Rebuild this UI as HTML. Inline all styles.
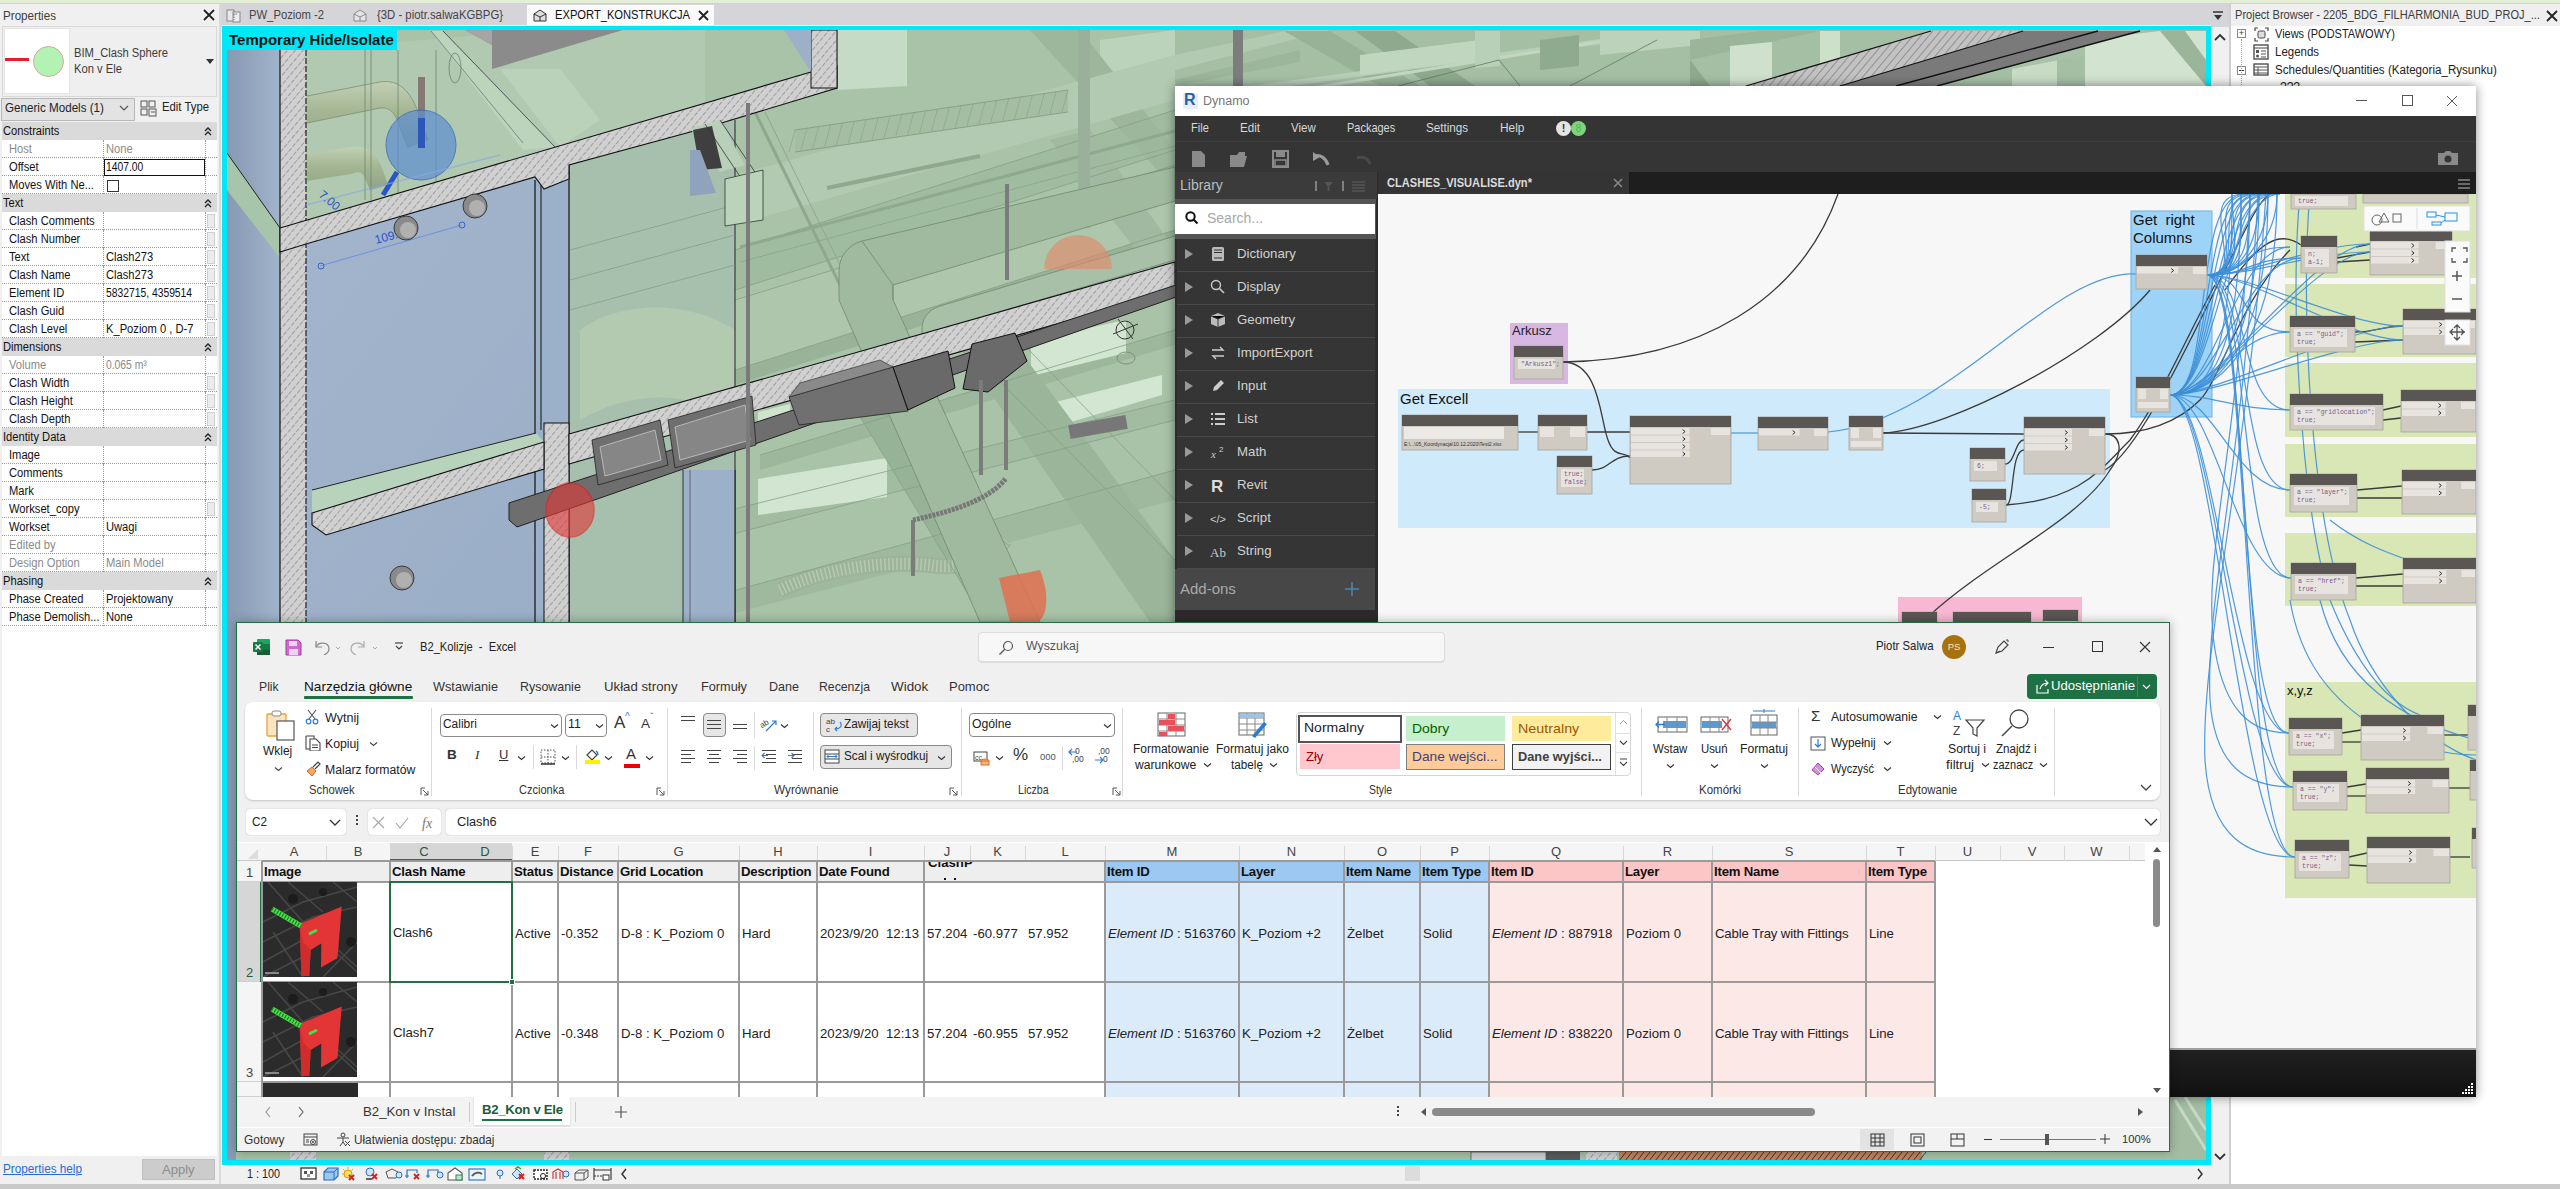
<!DOCTYPE html>
<html><head><meta charset="utf-8"><style>*{box-sizing:border-box;margin:0;padding:0}
html,body{width:2560px;height:1189px;overflow:hidden;background:#f0f0f0;font-family:"Liberation Sans",sans-serif;font-size:12px;color:#000;position:relative}
.a{position:absolute;white-space:nowrap}
.a>svg{display:block}
.t12{font-size:12px;line-height:14px}
.t13{font-size:13px;line-height:15px}
.t14{font-size:14px;line-height:16px}
</style></head><body>
<div class="a" style="left:221px;top:1165px;width:2009px;height:19px;background:#f0f0f0"></div>
<div class="a" style="left:247px;top:1167px;font-size:12px;line-height:14px;color:#222;transform:scaleX(0.899);transform-origin:0 0;">1 : 100</div>
<div class="a" style="left:236px;top:1166px"><svg width="380" height="16"><rect x="65" y="2" width="15" height="11" fill="#fff" stroke="#333" stroke-width="1.3"/><rect x="68" y="5" width="3" height="3" fill="#555"/><rect x="74" y="5" width="3" height="3" fill="#555"/><rect x="71" y="8" width="3" height="3" fill="#999"/><path d="M88 6l4-4h10v8l-4 4H88Z" fill="#9cc8f0" stroke="#2a6fc0" stroke-width="1.2"/><path d="M88 6h10v8M98 6l4-4" stroke="#2a6fc0" fill="none"/><circle cx="112" cy="8" r="4" fill="#f8e060" stroke="#d0a000"/><path d="M112 1v2M106 8h2M107 3l1.5 1.5M117 3l-1.5 1.5" stroke="#e0b000"/><path d="M113 9l5 5M118 9l-5 5" stroke="#e02020" stroke-width="2"/><circle cx="134" cy="6" r="4" fill="#cfe6fa" stroke="#2a6fc0"/><path d="M130 13h6" stroke="#333" stroke-width="1.5"/><path d="M136 8l5 5M141 8l-5 5" stroke="#e02020" stroke-width="2"/><path d="M150 6l6-3 6 3-2 6h-8Z" fill="#eee" stroke="#555"/><circle cx="163" cy="9" r="3" fill="#cfe6fa" stroke="#2a6fc0"/><path d="M171 12V4h10v3M169 10h4" stroke="#2a6fc0" stroke-width="1.2" fill="none"/><path d="M178 8l5 5M183 8l-5 5" stroke="#e02020" stroke-width="2"/><path d="M192 12V4h10v3M190 10h4" stroke="#2a6fc0" stroke-width="1.2" fill="none"/><circle cx="204" cy="9" r="3" fill="#cfe6fa" stroke="#2a6fc0"/><path d="M212 7l7-5 7 5v7h-14Z" fill="#fff" stroke="#555" stroke-width="1.1"/><rect x="220" y="9" width="6" height="5" fill="#bde6d0" stroke="#2a8a5a"/><rect x="233" y="3" width="16" height="11" fill="#e8f2fb" stroke="#2a6fc0" stroke-width="1.1"/><path d="M236 10c3-4 7-4 10-2" stroke="#555" stroke-width="2" fill="none"/><circle cx="264" cy="7" r="3" fill="#cfe6fa" stroke="#2a6fc0"/><path d="M264 10v3" stroke="#2a6fc0"/><path d="M276 8l5-5 5 5-5 5Z" fill="#cfe6fa" stroke="#2a6fc0"/><path d="M279 3l3-2 3 2" stroke="#3a9a3a" fill="none" stroke-width="1.5"/><path d="M283 8l5 5M288 8l-5 5" stroke="#e02020" stroke-width="2"/><rect x="298" y="4" width="13" height="9" fill="#fff" stroke="#222" stroke-width="1.4" stroke-dasharray="2 1"/><circle cx="307" cy="10" r="2.5" fill="none" stroke="#222"/><path d="M317 13V6l5-3 5 3v7M320 6v7M324 6v7" stroke="#c03030" stroke-width="1.1" fill="none"/><circle cx="330" cy="8" r="3" fill="#cfe6fa" stroke="#2a6fc0"/><path d="M339 7l4-3h9v7l-4 3h-9Z" fill="#eee" stroke="#555"/><path d="M339 7h9v7M348 7l4-3" stroke="#555" fill="none"/><path d="M358 2v12M375 2v12M358 4h17" stroke="#333" stroke-width="1.1"/><path d="M358 10h8" stroke="#333" stroke-dasharray="2 1"/><rect x="367" y="9" width="6" height="5" fill="#fff" stroke="#333"/></svg></div>
<div class="a" style="left:620px;top:1168px"><svg width="8" height="12"><path d="M6 1L2 6L6 11" stroke="#333" fill="none" stroke-width="1.5"/></svg></div>
<div class="a" style="left:1405px;top:1166px;width:15px;height:15px;background:#dcdcdc"></div>
<div class="a" style="left:2196px;top:1168px"><svg width="8" height="12"><path d="M2 1L6 6L2 11" stroke="#333" fill="none" stroke-width="1.5"/></svg></div>
<div class="a" style="left:2211px;top:27px;width:18px;height:1138px;background:#f0f0f0"></div>
<div class="a" style="left:2214px;top:33px"><svg width="12" height="9"><path d="M1 7L6 2L11 7" stroke="#333" fill="none" stroke-width="1.8"/></svg></div>
<div class="a" style="left:2214px;top:1152px"><svg width="12" height="9"><path d="M1 2L6 7L11 2" stroke="#333" fill="none" stroke-width="1.8"/></svg></div>
<div class="a" style="left:0;top:1184px;width:2560px;height:5px;background:#c9c9c9"></div>
<div class="a" style="left:0;top:0;width:2560px;height:3px;background:#e4edd6"></div>
<div class="a" style="left:0;top:3px;width:2560px;height:2px;background:#cfd3cc"></div>
<div class="a" style="left:0;top:4px;width:219px;height:1180px;background:#f0f0f0"></div>
<div class="a" style="left:219px;top:4px;width:2px;height:1180px;background:#d9d9d9"></div>
<div class="a" style="left:3px;top:9px;font-size:12.5px;line-height:15px;color:#3c3c3c;transform:scaleX(0.930);transform-origin:0 0;">Properties</div>
<div class="a" style="left:202px;top:8px;width:14px;height:14px"><svg width="14" height="14"><path d="M2 2L12 12M12 2L2 12" stroke="#222" stroke-width="1.8"/></svg></div>
<div class="a" style="left:2px;top:26px;width:215px;height:71px;border:1px solid #d8d8d8;background:#efefef"></div>
<div class="a" style="left:4px;top:28px;width:66px;height:66px;background:#fff;border:1px solid #e4e4e4"></div>
<div class="a" style="left:5px;top:58px;width:24px;height:3px;background:#e0202a"></div>
<div class="a" style="left:33px;top:46px;width:31px;height:31px;border-radius:50%;background:#b2f2b2;border:1.5px solid #d9a8a0"></div>
<div class="a" style="left:74px;top:46px;font-size:12px;line-height:14px;color:#3c3c3c;transform:scaleX(0.933);transform-origin:0 0;">BIM_Clash Sphere</div>
<div class="a" style="left:74px;top:62px;font-size:12px;line-height:14px;color:#3c3c3c;transform:scaleX(0.934);transform-origin:0 0;">Kon v Ele</div>
<div class="a" style="left:206px;top:59px;width:0;height:0;border-left:4px solid transparent;border-right:4px solid transparent;border-top:5px solid #333"></div>
<div class="a" style="left:1px;top:98px;width:134px;height:23px;background:#e3e3e3;border:1px solid #b8b8b8"></div>
<div class="a" style="left:5px;top:101px;font-size:12px;line-height:14px;color:#222;transform:scaleX(0.970);transform-origin:0 0;">Generic Models (1)</div>
<div class="a" style="left:119px;top:104px"><svg width="10" height="8"><path d="M1 2L5 6L9 2" stroke="#555" fill="none" stroke-width="1.2"/></svg></div>
<div class="a" style="left:140px;top:100px"><svg width="18" height="17"><rect x="1" y="1" width="6" height="6" fill="none" stroke="#555"/><rect x="9" y="1" width="6" height="6" fill="none" stroke="#555"/><rect x="1" y="9" width="6" height="6" fill="none" stroke="#555"/><rect x="9" y="9" width="7" height="7" fill="none" stroke="#555"/><path d="M11 12h4" stroke="#555"/></svg></div>
<div class="a" style="left:162px;top:100px;font-size:12px;line-height:14px;color:#222;transform:scaleX(0.944);transform-origin:0 0;">Edit Type</div>
<div class="a" style="left:2px;top:122px;width:215px;height:18px;background:#dadada"></div>
<div class="a" style="left:3px;top:124px;font-size:12px;line-height:14px;color:#111;transform:scaleX(0.930);transform-origin:0 0;">Constraints</div>
<div class="a" style="left:203px;top:126px"><svg width="10" height="10"><path d="M2 5L5 2L8 5M2 9L5 6L8 9" stroke="#222" fill="none" stroke-width="1.3"/></svg></div>
<div class="a" style="left:2px;top:140px;width:215px;height:18px;background:#fff;border-bottom:1px dotted #9a9a9a"></div>
<div class="a" style="left:103px;top:140px;width:0;height:18px;border-left:1px dotted #9a9a9a"></div>
<div class="a" style="left:205px;top:140px;width:0;height:18px;border-left:1px dotted #9a9a9a"></div>
<div class="a" style="left:9px;top:142px;font-size:12px;line-height:14px;color:#8a8a8a;transform:scaleX(0.930);transform-origin:0 0;">Host</div>
<div class="a" style="left:106px;top:142px;font-size:12px;line-height:14px;color:#8a8a8a;transform:scaleX(0.930);transform-origin:0 0;">None</div>
<div class="a" style="left:2px;top:158px;width:215px;height:18px;background:#fff;border-bottom:1px dotted #9a9a9a"></div>
<div class="a" style="left:103px;top:158px;width:0;height:18px;border-left:1px dotted #9a9a9a"></div>
<div class="a" style="left:205px;top:158px;width:0;height:18px;border-left:1px dotted #9a9a9a"></div>
<div class="a" style="left:9px;top:160px;font-size:12px;line-height:14px;color:#111;transform:scaleX(0.930);transform-origin:0 0;">Offset</div>
<div class="a" style="left:104px;top:159px;width:101px;height:17px;border:1.5px solid #111;background:#fff"></div>
<div class="a" style="left:106px;top:160px;font-size:12px;line-height:14px;color:#111;transform:scaleX(0.860);transform-origin:0 0;">1407.00</div>
<div class="a" style="left:2px;top:176px;width:215px;height:18px;background:#fff;border-bottom:1px dotted #9a9a9a"></div>
<div class="a" style="left:103px;top:176px;width:0;height:18px;border-left:1px dotted #9a9a9a"></div>
<div class="a" style="left:205px;top:176px;width:0;height:18px;border-left:1px dotted #9a9a9a"></div>
<div class="a" style="left:9px;top:178px;font-size:12px;line-height:14px;color:#111;transform:scaleX(0.930);transform-origin:0 0;">Moves With Ne...</div>
<div class="a" style="left:107px;top:180px;width:12px;height:12px;border:1px solid #333;background:#fff"></div>
<div class="a" style="left:2px;top:194px;width:215px;height:18px;background:#dadada"></div>
<div class="a" style="left:3px;top:196px;font-size:12px;line-height:14px;color:#111;transform:scaleX(0.930);transform-origin:0 0;">Text</div>
<div class="a" style="left:203px;top:198px"><svg width="10" height="10"><path d="M2 5L5 2L8 5M2 9L5 6L8 9" stroke="#222" fill="none" stroke-width="1.3"/></svg></div>
<div class="a" style="left:2px;top:212px;width:215px;height:18px;background:#fff;border-bottom:1px dotted #9a9a9a"></div>
<div class="a" style="left:103px;top:212px;width:0;height:18px;border-left:1px dotted #9a9a9a"></div>
<div class="a" style="left:205px;top:212px;width:0;height:18px;border-left:1px dotted #9a9a9a"></div>
<div class="a" style="left:9px;top:214px;font-size:12px;line-height:14px;color:#111;transform:scaleX(0.930);transform-origin:0 0;">Clash Comments</div>
<div class="a" style="left:207px;top:214px;width:8px;height:14px;background:#ececec;border:1px solid #cfcfcf"></div>
<div class="a" style="left:2px;top:230px;width:215px;height:18px;background:#fff;border-bottom:1px dotted #9a9a9a"></div>
<div class="a" style="left:103px;top:230px;width:0;height:18px;border-left:1px dotted #9a9a9a"></div>
<div class="a" style="left:205px;top:230px;width:0;height:18px;border-left:1px dotted #9a9a9a"></div>
<div class="a" style="left:9px;top:232px;font-size:12px;line-height:14px;color:#111;transform:scaleX(0.930);transform-origin:0 0;">Clash Number</div>
<div class="a" style="left:207px;top:232px;width:8px;height:14px;background:#ececec;border:1px solid #cfcfcf"></div>
<div class="a" style="left:2px;top:248px;width:215px;height:18px;background:#fff;border-bottom:1px dotted #9a9a9a"></div>
<div class="a" style="left:103px;top:248px;width:0;height:18px;border-left:1px dotted #9a9a9a"></div>
<div class="a" style="left:205px;top:248px;width:0;height:18px;border-left:1px dotted #9a9a9a"></div>
<div class="a" style="left:9px;top:250px;font-size:12px;line-height:14px;color:#111;transform:scaleX(0.930);transform-origin:0 0;">Text</div>
<div class="a" style="left:106px;top:250px;font-size:12px;line-height:14px;color:#111;transform:scaleX(0.930);transform-origin:0 0;">Clash273</div>
<div class="a" style="left:207px;top:250px;width:8px;height:14px;background:#ececec;border:1px solid #cfcfcf"></div>
<div class="a" style="left:2px;top:266px;width:215px;height:18px;background:#fff;border-bottom:1px dotted #9a9a9a"></div>
<div class="a" style="left:103px;top:266px;width:0;height:18px;border-left:1px dotted #9a9a9a"></div>
<div class="a" style="left:205px;top:266px;width:0;height:18px;border-left:1px dotted #9a9a9a"></div>
<div class="a" style="left:9px;top:268px;font-size:12px;line-height:14px;color:#111;transform:scaleX(0.930);transform-origin:0 0;">Clash Name</div>
<div class="a" style="left:106px;top:268px;font-size:12px;line-height:14px;color:#111;transform:scaleX(0.930);transform-origin:0 0;">Clash273</div>
<div class="a" style="left:207px;top:268px;width:8px;height:14px;background:#ececec;border:1px solid #cfcfcf"></div>
<div class="a" style="left:2px;top:284px;width:215px;height:18px;background:#fff;border-bottom:1px dotted #9a9a9a"></div>
<div class="a" style="left:103px;top:284px;width:0;height:18px;border-left:1px dotted #9a9a9a"></div>
<div class="a" style="left:205px;top:284px;width:0;height:18px;border-left:1px dotted #9a9a9a"></div>
<div class="a" style="left:9px;top:286px;font-size:12px;line-height:14px;color:#111;transform:scaleX(0.930);transform-origin:0 0;">Element ID</div>
<div class="a" style="left:106px;top:286px;font-size:12px;line-height:14px;color:#111;transform:scaleX(0.860);transform-origin:0 0;">5832715, 4359514</div>
<div class="a" style="left:207px;top:286px;width:8px;height:14px;background:#ececec;border:1px solid #cfcfcf"></div>
<div class="a" style="left:2px;top:302px;width:215px;height:18px;background:#fff;border-bottom:1px dotted #9a9a9a"></div>
<div class="a" style="left:103px;top:302px;width:0;height:18px;border-left:1px dotted #9a9a9a"></div>
<div class="a" style="left:205px;top:302px;width:0;height:18px;border-left:1px dotted #9a9a9a"></div>
<div class="a" style="left:9px;top:304px;font-size:12px;line-height:14px;color:#111;transform:scaleX(0.930);transform-origin:0 0;">Clash Guid</div>
<div class="a" style="left:207px;top:304px;width:8px;height:14px;background:#ececec;border:1px solid #cfcfcf"></div>
<div class="a" style="left:2px;top:320px;width:215px;height:18px;background:#fff;border-bottom:1px dotted #9a9a9a"></div>
<div class="a" style="left:103px;top:320px;width:0;height:18px;border-left:1px dotted #9a9a9a"></div>
<div class="a" style="left:205px;top:320px;width:0;height:18px;border-left:1px dotted #9a9a9a"></div>
<div class="a" style="left:9px;top:322px;font-size:12px;line-height:14px;color:#111;transform:scaleX(0.930);transform-origin:0 0;">Clash Level</div>
<div class="a" style="left:106px;top:322px;font-size:12px;line-height:14px;color:#111;transform:scaleX(0.930);transform-origin:0 0;">K_Poziom 0 , D-7</div>
<div class="a" style="left:207px;top:322px;width:8px;height:14px;background:#ececec;border:1px solid #cfcfcf"></div>
<div class="a" style="left:2px;top:338px;width:215px;height:18px;background:#dadada"></div>
<div class="a" style="left:3px;top:340px;font-size:12px;line-height:14px;color:#111;transform:scaleX(0.930);transform-origin:0 0;">Dimensions</div>
<div class="a" style="left:203px;top:342px"><svg width="10" height="10"><path d="M2 5L5 2L8 5M2 9L5 6L8 9" stroke="#222" fill="none" stroke-width="1.3"/></svg></div>
<div class="a" style="left:2px;top:356px;width:215px;height:18px;background:#fff;border-bottom:1px dotted #9a9a9a"></div>
<div class="a" style="left:103px;top:356px;width:0;height:18px;border-left:1px dotted #9a9a9a"></div>
<div class="a" style="left:205px;top:356px;width:0;height:18px;border-left:1px dotted #9a9a9a"></div>
<div class="a" style="left:9px;top:358px;font-size:12px;line-height:14px;color:#8a8a8a;transform:scaleX(0.930);transform-origin:0 0;">Volume</div>
<div class="a" style="left:106px;top:358px;font-size:12px;line-height:14px;color:#8a8a8a;transform:scaleX(0.860);transform-origin:0 0;">0.065 m³</div>
<div class="a" style="left:2px;top:374px;width:215px;height:18px;background:#fff;border-bottom:1px dotted #9a9a9a"></div>
<div class="a" style="left:103px;top:374px;width:0;height:18px;border-left:1px dotted #9a9a9a"></div>
<div class="a" style="left:205px;top:374px;width:0;height:18px;border-left:1px dotted #9a9a9a"></div>
<div class="a" style="left:9px;top:376px;font-size:12px;line-height:14px;color:#111;transform:scaleX(0.930);transform-origin:0 0;">Clash Width</div>
<div class="a" style="left:207px;top:376px;width:8px;height:14px;background:#ececec;border:1px solid #cfcfcf"></div>
<div class="a" style="left:2px;top:392px;width:215px;height:18px;background:#fff;border-bottom:1px dotted #9a9a9a"></div>
<div class="a" style="left:103px;top:392px;width:0;height:18px;border-left:1px dotted #9a9a9a"></div>
<div class="a" style="left:205px;top:392px;width:0;height:18px;border-left:1px dotted #9a9a9a"></div>
<div class="a" style="left:9px;top:394px;font-size:12px;line-height:14px;color:#111;transform:scaleX(0.930);transform-origin:0 0;">Clash Height</div>
<div class="a" style="left:207px;top:394px;width:8px;height:14px;background:#ececec;border:1px solid #cfcfcf"></div>
<div class="a" style="left:2px;top:410px;width:215px;height:18px;background:#fff;border-bottom:1px dotted #9a9a9a"></div>
<div class="a" style="left:103px;top:410px;width:0;height:18px;border-left:1px dotted #9a9a9a"></div>
<div class="a" style="left:205px;top:410px;width:0;height:18px;border-left:1px dotted #9a9a9a"></div>
<div class="a" style="left:9px;top:412px;font-size:12px;line-height:14px;color:#111;transform:scaleX(0.930);transform-origin:0 0;">Clash Depth</div>
<div class="a" style="left:207px;top:412px;width:8px;height:14px;background:#ececec;border:1px solid #cfcfcf"></div>
<div class="a" style="left:2px;top:428px;width:215px;height:18px;background:#dadada"></div>
<div class="a" style="left:3px;top:430px;font-size:12px;line-height:14px;color:#111;transform:scaleX(0.930);transform-origin:0 0;">Identity Data</div>
<div class="a" style="left:203px;top:432px"><svg width="10" height="10"><path d="M2 5L5 2L8 5M2 9L5 6L8 9" stroke="#222" fill="none" stroke-width="1.3"/></svg></div>
<div class="a" style="left:2px;top:446px;width:215px;height:18px;background:#fff;border-bottom:1px dotted #9a9a9a"></div>
<div class="a" style="left:103px;top:446px;width:0;height:18px;border-left:1px dotted #9a9a9a"></div>
<div class="a" style="left:205px;top:446px;width:0;height:18px;border-left:1px dotted #9a9a9a"></div>
<div class="a" style="left:9px;top:448px;font-size:12px;line-height:14px;color:#111;transform:scaleX(0.930);transform-origin:0 0;">Image</div>
<div class="a" style="left:2px;top:464px;width:215px;height:18px;background:#fff;border-bottom:1px dotted #9a9a9a"></div>
<div class="a" style="left:103px;top:464px;width:0;height:18px;border-left:1px dotted #9a9a9a"></div>
<div class="a" style="left:205px;top:464px;width:0;height:18px;border-left:1px dotted #9a9a9a"></div>
<div class="a" style="left:9px;top:466px;font-size:12px;line-height:14px;color:#111;transform:scaleX(0.930);transform-origin:0 0;">Comments</div>
<div class="a" style="left:2px;top:482px;width:215px;height:18px;background:#fff;border-bottom:1px dotted #9a9a9a"></div>
<div class="a" style="left:103px;top:482px;width:0;height:18px;border-left:1px dotted #9a9a9a"></div>
<div class="a" style="left:205px;top:482px;width:0;height:18px;border-left:1px dotted #9a9a9a"></div>
<div class="a" style="left:9px;top:484px;font-size:12px;line-height:14px;color:#111;transform:scaleX(0.930);transform-origin:0 0;">Mark</div>
<div class="a" style="left:2px;top:500px;width:215px;height:18px;background:#fff;border-bottom:1px dotted #9a9a9a"></div>
<div class="a" style="left:103px;top:500px;width:0;height:18px;border-left:1px dotted #9a9a9a"></div>
<div class="a" style="left:205px;top:500px;width:0;height:18px;border-left:1px dotted #9a9a9a"></div>
<div class="a" style="left:9px;top:502px;font-size:12px;line-height:14px;color:#111;transform:scaleX(0.930);transform-origin:0 0;">Workset_copy</div>
<div class="a" style="left:207px;top:502px;width:8px;height:14px;background:#ececec;border:1px solid #cfcfcf"></div>
<div class="a" style="left:2px;top:518px;width:215px;height:18px;background:#fff;border-bottom:1px dotted #9a9a9a"></div>
<div class="a" style="left:103px;top:518px;width:0;height:18px;border-left:1px dotted #9a9a9a"></div>
<div class="a" style="left:205px;top:518px;width:0;height:18px;border-left:1px dotted #9a9a9a"></div>
<div class="a" style="left:9px;top:520px;font-size:12px;line-height:14px;color:#111;transform:scaleX(0.930);transform-origin:0 0;">Workset</div>
<div class="a" style="left:106px;top:520px;font-size:12px;line-height:14px;color:#111;transform:scaleX(0.930);transform-origin:0 0;">Uwagi</div>
<div class="a" style="left:2px;top:536px;width:215px;height:18px;background:#fff;border-bottom:1px dotted #9a9a9a"></div>
<div class="a" style="left:103px;top:536px;width:0;height:18px;border-left:1px dotted #9a9a9a"></div>
<div class="a" style="left:205px;top:536px;width:0;height:18px;border-left:1px dotted #9a9a9a"></div>
<div class="a" style="left:9px;top:538px;font-size:12px;line-height:14px;color:#8a8a8a;transform:scaleX(0.930);transform-origin:0 0;">Edited by</div>
<div class="a" style="left:2px;top:554px;width:215px;height:18px;background:#fff;border-bottom:1px dotted #9a9a9a"></div>
<div class="a" style="left:103px;top:554px;width:0;height:18px;border-left:1px dotted #9a9a9a"></div>
<div class="a" style="left:205px;top:554px;width:0;height:18px;border-left:1px dotted #9a9a9a"></div>
<div class="a" style="left:9px;top:556px;font-size:12px;line-height:14px;color:#8a8a8a;transform:scaleX(0.930);transform-origin:0 0;">Design Option</div>
<div class="a" style="left:106px;top:556px;font-size:12px;line-height:14px;color:#8a8a8a;transform:scaleX(0.930);transform-origin:0 0;">Main Model</div>
<div class="a" style="left:2px;top:572px;width:215px;height:18px;background:#dadada"></div>
<div class="a" style="left:3px;top:574px;font-size:12px;line-height:14px;color:#111;transform:scaleX(0.930);transform-origin:0 0;">Phasing</div>
<div class="a" style="left:203px;top:576px"><svg width="10" height="10"><path d="M2 5L5 2L8 5M2 9L5 6L8 9" stroke="#222" fill="none" stroke-width="1.3"/></svg></div>
<div class="a" style="left:2px;top:590px;width:215px;height:18px;background:#fff;border-bottom:1px dotted #9a9a9a"></div>
<div class="a" style="left:103px;top:590px;width:0;height:18px;border-left:1px dotted #9a9a9a"></div>
<div class="a" style="left:205px;top:590px;width:0;height:18px;border-left:1px dotted #9a9a9a"></div>
<div class="a" style="left:9px;top:592px;font-size:12px;line-height:14px;color:#111;transform:scaleX(0.930);transform-origin:0 0;">Phase Created</div>
<div class="a" style="left:106px;top:592px;font-size:12px;line-height:14px;color:#111;transform:scaleX(0.930);transform-origin:0 0;">Projektowany</div>
<div class="a" style="left:2px;top:608px;width:215px;height:18px;background:#fff;border-bottom:1px dotted #9a9a9a"></div>
<div class="a" style="left:103px;top:608px;width:0;height:18px;border-left:1px dotted #9a9a9a"></div>
<div class="a" style="left:205px;top:608px;width:0;height:18px;border-left:1px dotted #9a9a9a"></div>
<div class="a" style="left:9px;top:610px;font-size:12px;line-height:14px;color:#111;transform:scaleX(0.930);transform-origin:0 0;">Phase Demolish...</div>
<div class="a" style="left:106px;top:610px;font-size:12px;line-height:14px;color:#111;transform:scaleX(0.930);transform-origin:0 0;">None</div>
<div class="a" style="left:2px;top:626px;width:215px;height:530px;background:#fff"></div>
<div class="a" style="left:3px;top:1162px;font-size:12px;line-height:14px;color:#1f6fd0;transform:scaleX(0.979);transform-origin:0 0;text-decoration:underline">Properties help</div>
<div class="a" style="left:142px;top:1159px;width:73px;height:21px;background:#cccccc;border:1px solid #c0c0c0"></div>
<div class="a t13" style="left:162px;top:1162px;color:#8c8c8c">Apply</div>
<div class="a" style="left:221px;top:4px;width:2009px;height:23px;background:#d5d5d9"></div>
<div class="a" style="left:226px;top:8px"><svg width="16" height="15"><rect x="1" y="2" width="7" height="11" fill="#e8e8e8" stroke="#888"/><rect x="7" y="4" width="7" height="10" fill="#eee" stroke="#888"/><path d="M7 6h5M8 6v6" stroke="#777" stroke-dasharray="1.5 1"/></svg></div>
<div class="a" style="left:249px;top:8px;font-size:12.5px;line-height:15px;color:#444;transform:scaleX(0.900);transform-origin:0 0;">PW_Poziom -2</div>
<div class="a" style="left:352px;top:8px"><svg width="16" height="15"><path d="M2 6L8 2L14 6V13H2Z" fill="#e6e6e6" stroke="#888"/><path d="M2 6L8 9L14 6M8 9V13" stroke="#888" fill="none"/></svg></div>
<div class="a" style="left:377px;top:8px;font-size:12.5px;line-height:15px;color:#444;transform:scaleX(0.907);transform-origin:0 0;">{3D - piotr.salwaKGBPG}</div>
<div class="a" style="left:527px;top:5px;width:187px;height:22px;background:#fafafa"></div>
<div class="a" style="left:532px;top:8px"><svg width="16" height="15"><path d="M2 6L8 2L14 6V13H2Z" fill="#ddd" stroke="#333"/><path d="M2 6L8 9L14 6M8 9V13" stroke="#333" fill="none"/></svg></div>
<div class="a" style="left:555px;top:8px;font-size:12.5px;line-height:15px;color:#111;transform:scaleX(0.893);transform-origin:0 0;">EXPORT_KONSTRUKCJA</div>
<div class="a" style="left:698px;top:10px"><svg width="11" height="11"><path d="M1 1L10 10M10 1L1 10" stroke="#222" stroke-width="1.8"/></svg></div>
<div class="a" style="left:2212px;top:10px"><svg width="12" height="12"><path d="M1 2h10" stroke="#333" stroke-width="1.5"/><path d="M2 5h8L6 10Z" fill="#333"/></svg></div>
<div class="a" style="left:2230px;top:4px;width:330px;height:1180px;background:#fff"></div>
<div class="a" style="left:2229px;top:4px;width:2px;height:1180px;background:#cfcfcf"></div>
<div class="a" style="left:2231px;top:4px;width:329px;height:22px;background:#efefef"></div>
<div class="a" style="left:2235px;top:8px;font-size:12.5px;line-height:15px;color:#3c3c3c;transform:scaleX(0.885);transform-origin:0 0;">Project Browser - 2205_BDG_FILHARMONIA_BUD_PROJ_...</div>
<div class="a" style="left:2546px;top:10px"><svg width="12" height="12"><path d="M1 1L11 11M11 1L1 11" stroke="#222" stroke-width="1.8"/></svg></div>
<div class="a" style="left:2237px;top:29px;width:9px;height:9px;border:1px solid #888;background:#fff;font-size:9px;line-height:7px;text-align:center;color:#333">+</div>
<div class="a" style="left:2237px;top:66px;width:9px;height:9px;border:1px solid #888;background:#fff"></div><div class="a" style="left:2239px;top:70px;width:5px;height:1px;background:#333"></div>
<div class="a" style="left:2241px;top:39px;width:0;height:50px;border-left:1px dotted #999"></div>
<div class="a" style="left:2254px;top:27px"><svg width="15" height="15"><path d="M1 4V1h3M11 1h3v3M14 11v3h-3M4 14H1v-3" stroke="#444" fill="none" stroke-width="1.2"/><rect x="4" y="4" width="7" height="7" rx="1.5" fill="#ddd" stroke="#444"/></svg></div>
<div class="a" style="left:2275px;top:27px;font-size:12px;line-height:14px;color:#222;transform:scaleX(0.915);transform-origin:0 0;">Views (PODSTAWOWY)</div>
<div class="a" style="left:2253px;top:44px"><svg width="16" height="16"><rect x="1" y="1" width="14" height="14" fill="#fff" stroke="#444" stroke-width="1.3"/><path d="M1 4h14" stroke="#444"/><rect x="3" y="6" width="3" height="3" fill="#555"/><circle cx="4.5" cy="12" r="1.5" fill="#555"/><path d="M8 7h5M8 10h5M8 13h5" stroke="#555"/></svg></div>
<div class="a" style="left:2275px;top:45px;font-size:12px;line-height:14px;color:#222;transform:scaleX(0.956);transform-origin:0 0;">Legends</div>
<div class="a" style="left:2253px;top:63px"><svg width="16" height="13"><rect x="1" y="1" width="14" height="11" fill="#fff" stroke="#444" stroke-width="1.3"/><path d="M1 4h14M1 7h14M1 10h14M5 4v8" stroke="#555"/></svg></div>
<div class="a" style="left:2275px;top:63px;font-size:12px;line-height:14px;color:#222;transform:scaleX(0.967);transform-origin:0 0;">Schedules/Quantities (Kategoria_Rysunku)</div>
<div class="a t12" style="left:2280px;top:80px;color:#222">???</div>
<svg class="a" style="left:0;top:0" width="2560" height="1189" viewBox="0 0 2560 1189">
<defs>
<pattern id="hat" patternUnits="userSpaceOnUse" width="6" height="6" patternTransform="rotate(40)"><rect width="6" height="6" fill="#d0d0d0"/><path d="M0 0V6" stroke="#5e5e5e" stroke-width="0.9" stroke-dasharray="2.5 1.5"/></pattern>
<pattern id="hat2" patternUnits="userSpaceOnUse" width="6" height="6" patternTransform="rotate(40)"><rect width="6" height="6" fill="#c2c2c2"/><path d="M0 0V6" stroke="#555" stroke-width="0.9"/></pattern>
<linearGradient id="bl" x1="0" y1="0" x2="1" y2="0"><stop offset="0" stop-color="#8799b3"/><stop offset="1" stop-color="#a1b4cb"/></linearGradient>
<linearGradient id="bp" x1="0" y1="0" x2="0.3" y2="1"><stop offset="0" stop-color="#a3b5cc"/><stop offset="1" stop-color="#97abc5"/></linearGradient>
<linearGradient id="pipe" x1="0" y1="0" x2="0" y2="1"><stop offset="0" stop-color="#c2d0b4"/><stop offset="0.45" stop-color="#a4b693"/><stop offset="1" stop-color="#8fa386"/></linearGradient>
<clipPath id="vc"><rect x="227" y="30" width="1979" height="1131"/></clipPath>
</defs>
<g clip-path="url(#vc)">
<rect x="227" y="30" width="1979" height="1131" fill="#a9c3a9"/>
<polygon points="735,250 1175,110 1175,150 735,290" fill="#a0bca0" />
<polygon points="735,300 1175,165 1175,230 735,370" fill="#adc6ac" />
<polygon points="735,370 1175,230 1175,245 735,385" fill="#98b398" />
<polygon points="760,455 1175,330 1175,345 760,470" fill="#9cb79c" />
<polygon points="690,520 1175,400 1175,420 690,545" fill="#a2bca2" />
<polygon points="700,600 1175,470 1175,500 700,622" fill="#9fb99f" />
<polygon points="758,479 887,458 887,497 758,515" fill="#d2e5d0" />
<polygon points="1031,340 1126,320 1126,353 1031,376" fill="#d3e6d1" />
<polygon points="1044,405 1162,375 1162,395 1044,430" fill="#d3e6d1" />
<polygon points="758,412 790,404 790,424 758,435" fill="#cfe3cd" />
<polygon points="1110,260 1175,245 1175,290 1110,305" fill="#c5dbc4" />
<polygon points="1100,40 1175,30 1175,60 1100,80" fill="#bcd3bb" />
<polygon points="850,400 900,390 1040,622 985,622" fill="#97b397" />
<polygon points="940,320 990,310 1175,560 1175,622 1150,622" fill="#9ab59a" />
<polygon points="1050,140 1090,130 1175,250 1175,300" fill="#a0b9a0" />
<polygon points="1030,30 1080,30 1175,150 1175,190" fill="#9db79d" />
<polygon points="735,175 1175,55 1175,100 735,225" fill="#b2cab1" />
<polygon points="838,30 907,30 907,86 838,90" fill="#c6dbc5" />
<path d="M580 330 C620 300 690 300 735 330 L735 420 C690 390 630 390 580 420 Z" fill="#b3cab0"/>
<path d="M780 590 C820 570 880 560 930 565 C960 570 990 560 1005 540" stroke="#9db49a" stroke-width="16" fill="none"/>
<path d="M780 590 C820 570 880 560 930 565 C960 570 990 560 1005 540" stroke="#b7c9b3" stroke-width="12" fill="none" stroke-dasharray="1.5 2.5"/>
<line x1="735" y1="250" x2="1175" y2="110" stroke="#86a086" stroke-width="0.8"/>
<line x1="735" y1="290" x2="1175" y2="150" stroke="#86a086" stroke-width="0.8"/>
<line x1="735" y1="300" x2="1175" y2="165" stroke="#86a086" stroke-width="0.8"/>
<line x1="735" y1="370" x2="1175" y2="230" stroke="#86a086" stroke-width="0.8"/>
<line x1="760" y1="455" x2="1175" y2="330" stroke="#86a086" stroke-width="0.8"/>
<line x1="690" y1="520" x2="1175" y2="400" stroke="#86a086" stroke-width="0.8"/>
<line x1="690" y1="545" x2="1175" y2="420" stroke="#86a086" stroke-width="0.8"/>
<line x1="700" y1="600" x2="1175" y2="470" stroke="#86a086" stroke-width="0.8"/>
<line x1="850" y1="400" x2="985" y2="622" stroke="#86a086" stroke-width="0.8"/>
<line x1="900" y1="390" x2="1040" y2="622" stroke="#86a086" stroke-width="0.8"/>
<line x1="940" y1="320" x2="1175" y2="560" stroke="#86a086" stroke-width="0.8"/>
<line x1="990" y1="310" x2="1175" y2="500" stroke="#86a086" stroke-width="0.8"/>
<polygon points="795,130 1068,90 1068,112 795,152" fill="#a4bea4" />
<line x1="795.0" y1="130.0" x2="789.0" y2="152.0" stroke="#86a086" stroke-width="0.6"/>
<line x1="806.9" y1="128.3" x2="800.9" y2="150.3" stroke="#86a086" stroke-width="0.6"/>
<line x1="818.7" y1="126.5" x2="812.7" y2="148.5" stroke="#86a086" stroke-width="0.6"/>
<line x1="830.6" y1="124.8" x2="824.6" y2="146.8" stroke="#86a086" stroke-width="0.6"/>
<line x1="842.5" y1="123.0" x2="836.5" y2="145.0" stroke="#86a086" stroke-width="0.6"/>
<line x1="854.3" y1="121.3" x2="848.3" y2="143.3" stroke="#86a086" stroke-width="0.6"/>
<line x1="866.2" y1="119.6" x2="860.2" y2="141.6" stroke="#86a086" stroke-width="0.6"/>
<line x1="878.1" y1="117.8" x2="872.1" y2="139.8" stroke="#86a086" stroke-width="0.6"/>
<line x1="890.0" y1="116.1" x2="884.0" y2="138.1" stroke="#86a086" stroke-width="0.6"/>
<line x1="901.8" y1="114.3" x2="895.8" y2="136.3" stroke="#86a086" stroke-width="0.6"/>
<line x1="913.7" y1="112.6" x2="907.7" y2="134.6" stroke="#86a086" stroke-width="0.6"/>
<line x1="925.6" y1="110.9" x2="919.6" y2="132.9" stroke="#86a086" stroke-width="0.6"/>
<line x1="937.4" y1="109.1" x2="931.4" y2="131.1" stroke="#86a086" stroke-width="0.6"/>
<line x1="949.3" y1="107.4" x2="943.3" y2="129.4" stroke="#86a086" stroke-width="0.6"/>
<line x1="961.2" y1="105.7" x2="955.2" y2="127.7" stroke="#86a086" stroke-width="0.6"/>
<line x1="973.0" y1="103.9" x2="967.0" y2="125.9" stroke="#86a086" stroke-width="0.6"/>
<line x1="984.9" y1="102.2" x2="978.9" y2="124.2" stroke="#86a086" stroke-width="0.6"/>
<line x1="996.8" y1="100.4" x2="990.8" y2="122.4" stroke="#86a086" stroke-width="0.6"/>
<line x1="1008.7" y1="98.7" x2="1002.7" y2="120.7" stroke="#86a086" stroke-width="0.6"/>
<line x1="1020.5" y1="97.0" x2="1014.5" y2="119.0" stroke="#86a086" stroke-width="0.6"/>
<line x1="1032.4" y1="95.2" x2="1026.4" y2="117.2" stroke="#86a086" stroke-width="0.6"/>
<line x1="1044.3" y1="93.5" x2="1038.3" y2="115.5" stroke="#86a086" stroke-width="0.6"/>
<line x1="1056.1" y1="91.7" x2="1050.1" y2="113.7" stroke="#86a086" stroke-width="0.6"/>
<line x1="1068.0" y1="90.0" x2="1062.0" y2="112.0" stroke="#86a086" stroke-width="0.6"/>
<line x1="795" y1="130" x2="1068" y2="90" stroke="#7f997f" stroke-width="0.8"/>
<line x1="795" y1="152" x2="1068" y2="112" stroke="#7f997f" stroke-width="0.8"/>
<line x1="740" y1="247" x2="1175" y2="131" stroke="#8fa98f" stroke-width="3"/>
<line x1="740" y1="262" x2="1175" y2="146" stroke="#8fa98f" stroke-width="1"/>
<line x1="827" y1="188" x2="980" y2="156" stroke="#8fa98f" stroke-width="4"/>
<line x1="755" y1="112" x2="862" y2="330" stroke="#8ea88e" stroke-width="3"/>
<line x1="765" y1="112" x2="872" y2="330" stroke="#8ea88e" stroke-width="1"/>
<rect x="1078" y="30" width="12" height="198" fill="#9bb09b"/>
<path d="M893 285 L1175 201 L1175 167 L862 241 C846 246 839 258 839 272 L839 300 L980 622 L1040 622 L893 300 Z" fill="#a0baa0" stroke="#6f896f" stroke-width="0.8"/>
<line x1="893" y1="285" x2="893" y2="300" stroke="#6f896f" stroke-width="0.8"/>
<line x1="862" y1="241" x2="893" y2="285" stroke="#6f896f" stroke-width="0.8"/>
<path d="M935 331 L1175 260 L1175 236 L940 306 C928 310 922 318 922 330 L922 350 L950 350 Z" fill="#a7c0a7" stroke="#6f896f" stroke-width="0.8"/>
<polygon points="306,50 540,30 705,30 705,103 306,220" fill="#b0c9b0" />
<polygon points="431,31 443,31 555,147 523,150" fill="#bcd4bb" />
<polygon points="500,69 560,69 600,120 560,147" fill="#bad2b9" />
<path d="M307 96 L380 82 C398 79 410 90 418 112 L428 140 L408 148 L398 122 C394 111 388 107 380 108 L307 123 Z" fill="url(#pipe)"/>
<path d="M307 96 L380 82 C398 79 410 90 418 112 L428 140 M307 123 L380 108 C388 107 394 111 398 122 L408 148" stroke="#7d8f72" stroke-width="0.8" fill="none"/>
<path d="M307 154 L351 147 C368 145 376 152 382 168 L388 185 L370 190 L364 176 C360 170 356 173 351 174 L307 181 Z" fill="url(#pipe)"/>
<line x1="365" y1="50" x2="365" y2="200" stroke="#6f876f" stroke-width="0.8"/>
<line x1="371" y1="50" x2="371" y2="200" stroke="#6f876f" stroke-width="0.8"/>
<line x1="398" y1="50" x2="398" y2="200" stroke="#6f876f" stroke-width="0.8"/>
<line x1="436" y1="50" x2="436" y2="200" stroke="#6f876f" stroke-width="0.8"/>
<line x1="443" y1="31" x2="555" y2="147" stroke="#334" stroke-width="0.8"/>
<line x1="431" y1="31" x2="523" y2="143" stroke="#556" stroke-width="0.6"/>
<ellipse cx="455" cy="68" rx="6" ry="15" fill="none" stroke="#6a7f6a" stroke-width="0.8"/>
<polygon points="465,30 623,30 492,69 492,45" fill="#8b8b8b" />
<polygon points="465,30 492,30 492,45" fill="#a5a5a5" />
<polygon points="570,165 705,128 735,120 735,470 694,470 694,622 570,622" fill="#a7c0ae" />
<path d="M580 330 C620 300 690 300 735 330 L735 420 C690 390 630 390 580 420 Z" fill="#b3cab0"/>
<line x1="735" y1="120" x2="735" y2="622" stroke="#222" stroke-width="1"/>
<line x1="570" y1="250" x2="735" y2="205" stroke="#7f9a86" stroke-width="0.7"/>
<line x1="570" y1="280" x2="735" y2="235" stroke="#7f9a86" stroke-width="0.7"/>
<line x1="570" y1="310" x2="735" y2="265" stroke="#7f9a86" stroke-width="0.7"/>
<rect x="227" y="50" width="53" height="1111" fill="url(#bl)"/>
<polygon points="227,153 280,228 280,258 227,190" fill="#a6c5ab" />
<line x1="227" y1="153" x2="280" y2="228" stroke="#222" stroke-width="1"/>
<polygon points="306,244 535,177 535,1161 306,1161" fill="url(#bp)" />
<rect x="683" y="470" width="52" height="700" fill="#9cb1c9"/>
<line x1="683" y1="470" x2="683" y2="1161" stroke="#333" stroke-width="1"/>
<line x1="735" y1="470" x2="735" y2="1161" stroke="#222" stroke-width="1.2"/>
<line x1="690" y1="470" x2="690" y2="622" stroke="#555" stroke-width="0.8"/>
<rect x="535" y="170" width="35" height="1000" fill="#9bb1c9"/>
<line x1="535" y1="180" x2="535" y2="1161" stroke="#111" stroke-width="1.2"/>
<line x1="541" y1="180" x2="541" y2="430" stroke="#111" stroke-width="1"/>
<line x1="569" y1="164" x2="569" y2="1161" stroke="#111" stroke-width="1.2"/>
<rect x="544" y="423" width="25" height="740" fill="url(#hat)" stroke="#111" stroke-width="1"/>
<rect x="280" y="50" width="26" height="1111" fill="url(#hat)"/>
<line x1="280" y1="50" x2="280" y2="1161" stroke="#111" stroke-width="1.2"/>
<line x1="306" y1="50" x2="306" y2="1161" stroke="#111" stroke-width="1.1" stroke-dasharray="6 2"/>
<polygon points="280,228 811,72 837,66 837,88 705,128 569,165 569,179 544,189 535,177 306,244 280,252" fill="url(#hat)" stroke="#111" stroke-width="1.1"/>
<rect x="811" y="30" width="26" height="58" fill="url(#hat)" stroke="#111" stroke-width="1"/>
<polygon points="784,30 811,30 811,72" fill="#9cb0c8" />
<polygon points="690,128 720,120 745,165 720,172" fill="#b9cfb9" />
<polygon points="693,130 712,126 722,168 700,170" fill="#3f3f3f" />
<polygon points="690,150 700,150 716,193 690,196" fill="#8fa3bd" />
<line x1="720" y1="120" x2="763" y2="184" stroke="#333" stroke-width="0.8"/>
<line x1="705" y1="124" x2="745" y2="184" stroke="#333" stroke-width="0.8"/>
<polygon points="725,179 763,170 763,220 725,226" fill="#bcd3bb" />
<polygon points="725,179 763,170 763,220 725,226" fill="none" stroke="#333" stroke-width="0.8"/>
<polygon points="312,490 536,433 544,442 312,513" fill="#b8d3bb" />
<polygon points="312,513 544,442 544,469 326,535 312,525" fill="url(#hat)" stroke="#111" stroke-width="1.1"/>
<line x1="312" y1="490" x2="536" y2="433" stroke="#222" stroke-width="1"/>
<polygon points="569,434 1175,262 1175,290 569,464" fill="url(#hat)" stroke="#111" stroke-width="1.1"/>
<polygon points="509,503 1179,284 1179,296 517,527 509,520" fill="#6e6e6e" stroke="#222" stroke-width="1"/>
<polygon points="592,440 660,420 668,465 598,485" fill="#6f6f6f" stroke="#222" stroke-width="0.8"/>
<polygon points="600,447 655,430 661,460 605,476" fill="#868686" stroke="#c8c8c8" stroke-width="0.8"/>
<polygon points="668,420 752,396 756,445 675,468" fill="#6f6f6f" stroke="#222" stroke-width="0.8"/>
<polygon points="675,427 745,405 750,440 680,460" fill="#868686" stroke="#c8c8c8" stroke-width="0.8"/>
<polygon points="789,397 893,367 908,411 799,425" fill="#707070" stroke="#222" stroke-width="0.8"/>
<polygon points="789,397 893,367 880,360 800,383" fill="#8a8a8a" stroke="#222" stroke-width="0.6"/>
<polygon points="893,367 948,351 955,388 908,410" fill="#696969" stroke="#111" stroke-width="1"/>
<polygon points="972,344 1015,333 1027,361 988,392 963,389" fill="#6a6a6a" stroke="#111" stroke-width="1"/>
<line x1="748" y1="103" x2="748" y2="622" stroke="#7b7b7b" stroke-width="4"/>
<line x1="913" y1="520" x2="913" y2="576" stroke="#7b7b7b" stroke-width="4"/>
<line x1="981" y1="380" x2="981" y2="475" stroke="#7b7b7b" stroke-width="4"/>
<line x1="1006" y1="380" x2="1006" y2="470" stroke="#7b7b7b" stroke-width="4"/>
<line x1="1007" y1="184" x2="1007" y2="280" stroke="#7b7b7b" stroke-width="4"/>
<path d="M913 520 C950 512 990 500 1006 478" stroke="#777" stroke-width="5" fill="none" stroke-dasharray="3 1"/>
<rect x="1069" y="420" width="58" height="14" fill="#777" transform="rotate(-10 1098 427)"/>
<path d="M1113 334 L1138 324 M1118 319 L1133 339" stroke="#333" stroke-width="1"/><circle cx="1125" cy="330" r="9" fill="none" stroke="#333"/><ellipse cx="1126" cy="358" rx="9" ry="6" fill="none" stroke="#7a927a"/>
<rect x="418" y="77" width="7" height="70" fill="#857a72"/>
<circle cx="421" cy="145" r="35" fill="#5f8fd0" opacity="0.72" stroke="#2f5fbf" stroke-width="1"/>
<rect x="418" y="118" width="7" height="30" fill="#2d58b8"/>
<path d="M383 195 L397 172" stroke="#2a55c8" stroke-width="5"/>
<line x1="320" y1="266" x2="462" y2="225" stroke="#6c90e0" stroke-width="1"/>
<line x1="306" y1="205" x2="500" y2="155" stroke="#8aa6e8" stroke-width="1.5" opacity=".6"/>
<circle cx="321" cy="266" r="3" fill="none" stroke="#3366cc"/><circle cx="462" cy="225" r="3" fill="none" stroke="#3366cc"/>
<text x="376" y="244" font-size="12" fill="#2a55c8" transform="rotate(-15 376 244)" font-family="Liberation Sans">109.30</text>
<text x="318" y="196" font-size="12" fill="#2a55c8" transform="rotate(40 318 196)" font-family="Liberation Sans">7.00</text>
<ellipse cx="570" cy="510" rx="24" ry="27" fill="#e03838" opacity="0.62" stroke="#e02020" stroke-width="1.5"/>
<path d="M1044 269 A34 34 0 0 1 1112 269 Z" fill="#e08a6a" opacity=".65"/>
<path d="M999 578 L1040 570 C1052 600 1045 622 1035 622 L1010 622 Z" fill="#e07050" opacity=".85"/>
<circle cx="406" cy="228" r="12" fill="#8a8a8a" stroke="#3a3a3a"/><circle cx="408" cy="230" r="8" fill="#b0b0b0"/>
<circle cx="475" cy="206" r="12" fill="#8a8a8a" stroke="#3a3a3a"/><circle cx="477" cy="208" r="8" fill="#b0b0b0"/>
<circle cx="402" cy="578" r="12" fill="#8a8a8a" stroke="#3a3a3a"/><circle cx="404" cy="580" r="8" fill="#b0b0b0"/>
<polygon points="1175,30 2206,30 2206,86 1175,86" fill="#a5bfa5" />
<polygon points="1175,55 1290,30 1330,30 1175,70" fill="#b3cab2" />
<polygon points="1175,80 1300,50 1300,62 1175,86" fill="#9cb69c" />
<polygon points="1284,31 1330,31 1420,86 1380,86" fill="#97b297" />
<polygon points="1355,31 1395,31 1475,86 1430,86" fill="#8ea98e" />
<polygon points="1250,86 1660,31 1700,31 1290,86" fill="#b8ceb7" />
<polygon points="1315,86 1657,31 1675,31 1335,86" fill="#c2d6c1" />
<polygon points="1360,55 1480,40 1480,60 1360,75" fill="#c0d6bf" />
<polygon points="1475,31 1500,31 1500,66 1475,68" fill="#b9d0b8" />
<polygon points="1540,40 1579,35 1579,66 1540,70" fill="#8fab8f" />
<polygon points="1600,31 1700,31 1700,45 1600,55" fill="#bcd2bb" />
<line x1="1398" y1="86" x2="1499" y2="60" stroke="#5f7a5f" stroke-width="0.8"/>
<line x1="1499" y1="60" x2="1520" y2="86" stroke="#5f7a5f" stroke-width="0.8"/>
<line x1="1570" y1="86" x2="1657" y2="40" stroke="#5f7a5f" stroke-width="0.8"/>
<polygon points="1690,40 1760,31 1820,31 1690,60" fill="#9ab59a" />
<polygon points="1730,46 1772,42 1772,86 1730,86" fill="#cfe1cc" />
<polygon points="1820,31 1840,31 1840,62 1820,66" fill="#cde0ca" />
<polygon points="1690,60 1710,86 1690,86" fill="#8eaa8e" />
<polygon points="2012,57 2057,52 2057,86 2012,86" fill="#c7dbc5" />
<polygon points="2085,40 2160,31 2206,31 2206,86 2085,86" fill="#d2e4d0" />
<polygon points="2160,31 2185,31 2206,60 2206,86" fill="#9bb59b" />
<polygon points="1955,70 2085,45 2085,55 1955,80" fill="#a8c1a8" />
<polygon points="1746,86 1840,86 2023,31 1931,31" fill="url(#hat2)"/>
<polygon points="1840,86 1937,86 2140,31 2023,31" fill="#7a7a7a"/>
<line x1="1746" y1="86" x2="1931" y2="31" stroke="#111" stroke-width="1.3"/>
<line x1="1840" y1="86" x2="2023" y2="31" stroke="#111" stroke-width="1.3"/>
<line x1="1896" y1="86" x2="2098" y2="31" stroke="#111" stroke-width="1.3"/>
<line x1="1937" y1="86" x2="2140" y2="31" stroke="#111" stroke-width="1.3"/>
<rect x="1233" y="30" width="10" height="56" fill="#7d7d7d"/>
<polygon points="236,1152 2170,1152 2170,1161 236,1161" fill="#a7c0a7" />
<rect x="290" y="1152" width="26" height="9" fill="url(#hat)"/>
<rect x="544" y="1152" width="25" height="9" fill="url(#hat)"/>
<rect x="1619" y="1152" width="303" height="9" fill="#c4835c"/>
<line x1="1619" y1="1161" x2="1626" y2="1152" stroke="#222" stroke-width="0.8"/>
<line x1="1625" y1="1161" x2="1632" y2="1152" stroke="#222" stroke-width="0.8"/>
<line x1="1631" y1="1161" x2="1638" y2="1152" stroke="#222" stroke-width="0.8"/>
<line x1="1637" y1="1161" x2="1644" y2="1152" stroke="#222" stroke-width="0.8"/>
<line x1="1643" y1="1161" x2="1650" y2="1152" stroke="#222" stroke-width="0.8"/>
<line x1="1649" y1="1161" x2="1656" y2="1152" stroke="#222" stroke-width="0.8"/>
<line x1="1655" y1="1161" x2="1662" y2="1152" stroke="#222" stroke-width="0.8"/>
<line x1="1661" y1="1161" x2="1668" y2="1152" stroke="#222" stroke-width="0.8"/>
<line x1="1667" y1="1161" x2="1674" y2="1152" stroke="#222" stroke-width="0.8"/>
<line x1="1673" y1="1161" x2="1680" y2="1152" stroke="#222" stroke-width="0.8"/>
<line x1="1679" y1="1161" x2="1686" y2="1152" stroke="#222" stroke-width="0.8"/>
<line x1="1685" y1="1161" x2="1692" y2="1152" stroke="#222" stroke-width="0.8"/>
<line x1="1691" y1="1161" x2="1698" y2="1152" stroke="#222" stroke-width="0.8"/>
<line x1="1697" y1="1161" x2="1704" y2="1152" stroke="#222" stroke-width="0.8"/>
<line x1="1703" y1="1161" x2="1710" y2="1152" stroke="#222" stroke-width="0.8"/>
<line x1="1709" y1="1161" x2="1716" y2="1152" stroke="#222" stroke-width="0.8"/>
<line x1="1715" y1="1161" x2="1722" y2="1152" stroke="#222" stroke-width="0.8"/>
<line x1="1721" y1="1161" x2="1728" y2="1152" stroke="#222" stroke-width="0.8"/>
<line x1="1727" y1="1161" x2="1734" y2="1152" stroke="#222" stroke-width="0.8"/>
<line x1="1733" y1="1161" x2="1740" y2="1152" stroke="#222" stroke-width="0.8"/>
<line x1="1739" y1="1161" x2="1746" y2="1152" stroke="#222" stroke-width="0.8"/>
<line x1="1745" y1="1161" x2="1752" y2="1152" stroke="#222" stroke-width="0.8"/>
<line x1="1751" y1="1161" x2="1758" y2="1152" stroke="#222" stroke-width="0.8"/>
<line x1="1757" y1="1161" x2="1764" y2="1152" stroke="#222" stroke-width="0.8"/>
<line x1="1763" y1="1161" x2="1770" y2="1152" stroke="#222" stroke-width="0.8"/>
<line x1="1769" y1="1161" x2="1776" y2="1152" stroke="#222" stroke-width="0.8"/>
<line x1="1775" y1="1161" x2="1782" y2="1152" stroke="#222" stroke-width="0.8"/>
<line x1="1781" y1="1161" x2="1788" y2="1152" stroke="#222" stroke-width="0.8"/>
<line x1="1787" y1="1161" x2="1794" y2="1152" stroke="#222" stroke-width="0.8"/>
<line x1="1793" y1="1161" x2="1800" y2="1152" stroke="#222" stroke-width="0.8"/>
<line x1="1799" y1="1161" x2="1806" y2="1152" stroke="#222" stroke-width="0.8"/>
<line x1="1805" y1="1161" x2="1812" y2="1152" stroke="#222" stroke-width="0.8"/>
<line x1="1811" y1="1161" x2="1818" y2="1152" stroke="#222" stroke-width="0.8"/>
<line x1="1817" y1="1161" x2="1824" y2="1152" stroke="#222" stroke-width="0.8"/>
<line x1="1823" y1="1161" x2="1830" y2="1152" stroke="#222" stroke-width="0.8"/>
<line x1="1829" y1="1161" x2="1836" y2="1152" stroke="#222" stroke-width="0.8"/>
<line x1="1835" y1="1161" x2="1842" y2="1152" stroke="#222" stroke-width="0.8"/>
<line x1="1841" y1="1161" x2="1848" y2="1152" stroke="#222" stroke-width="0.8"/>
<line x1="1847" y1="1161" x2="1854" y2="1152" stroke="#222" stroke-width="0.8"/>
<line x1="1853" y1="1161" x2="1860" y2="1152" stroke="#222" stroke-width="0.8"/>
<line x1="1859" y1="1161" x2="1866" y2="1152" stroke="#222" stroke-width="0.8"/>
<line x1="1865" y1="1161" x2="1872" y2="1152" stroke="#222" stroke-width="0.8"/>
<line x1="1871" y1="1161" x2="1878" y2="1152" stroke="#222" stroke-width="0.8"/>
<line x1="1877" y1="1161" x2="1884" y2="1152" stroke="#222" stroke-width="0.8"/>
<line x1="1883" y1="1161" x2="1890" y2="1152" stroke="#222" stroke-width="0.8"/>
<line x1="1889" y1="1161" x2="1896" y2="1152" stroke="#222" stroke-width="0.8"/>
<line x1="1895" y1="1161" x2="1902" y2="1152" stroke="#222" stroke-width="0.8"/>
<line x1="1901" y1="1161" x2="1908" y2="1152" stroke="#222" stroke-width="0.8"/>
<line x1="1907" y1="1161" x2="1914" y2="1152" stroke="#222" stroke-width="0.8"/>
<line x1="1913" y1="1161" x2="1920" y2="1152" stroke="#222" stroke-width="0.8"/>
<line x1="1919" y1="1161" x2="1926" y2="1152" stroke="#222" stroke-width="0.8"/>
<rect x="1471" y="1152" width="75" height="9" fill="#cfcfcf" stroke="#333" stroke-width="0.6"/>
<rect x="1546" y="1152" width="34" height="9" fill="#5a5a5a"/>
<rect x="1586" y="1152" width="31" height="9" fill="url(#hat)"/>
<polygon points="2170,1097 2206,1097 2206,1161 2170,1161" fill="#a3bda3" />
<line x1="2175" y1="1100" x2="2206" y2="1150" stroke="#c7d9c6" stroke-width="3"/>
<line x1="2185" y1="1097" x2="2206" y2="1130" stroke="#c7d9c6" stroke-width="3"/>
</g>
<rect x="224.5" y="27.5" width="1984" height="1135" fill="none" stroke="#00e8f8" stroke-width="5"/>
<line x1="222" y1="25.5" x2="2211" y2="25.5" stroke="#d8f8fb" stroke-width="1"/>
</svg>
<div class="a" style="left:227px;top:30px;width:170px;height:20px;background:#00e8f8"></div>
<div class="a" style="left:229px;top:31px;font-weight:bold;font-size:15px;color:#111;white-space:nowrap">Temporary Hide/Isolate</div>
<div class="a" style="left:1175px;top:86px;width:1301px;height:1011px;background:#f7f7f7;box-shadow:0 0 10px rgba(0,0,0,.45)"></div>
<div class="a" style="left:1175px;top:86px;width:1301px;height:30px;background:#fff"></div>
<div class="a" style="left:1183px;top:93px;width:15px;height:16px;background:#e8eef7"></div>
<div class="a" style="left:1184px;top:91px;font-size:16px;font-weight:bold;color:#1f5fb0">R</div>
<div class="a t12" style="left:1203px;top:94px;color:#777;font-size:12.5px">Dynamo</div>
<div class="a" style="left:2356px;top:100px;width:11px;height:1px;background:#555"></div>
<div class="a" style="left:2402px;top:95px;width:11px;height:11px;border:1px solid #555"></div>
<div class="a" style="left:2446px;top:95px"><svg width="12" height="12"><path d="M1 1L11 11M11 1L1 11" stroke="#555" stroke-width="1"/></svg></div>
<div class="a" style="left:1175px;top:116px;width:1301px;height:25px;background:#343434"></div>
<div class="a" style="left:1175px;top:141px;width:1301px;height:31px;background:#353535;border-top:1px solid #3d3d3d"></div>
<div class="a" style="left:1191px;top:120px;font-size:13.5px;line-height:16px;color:#d8d8d8;transform:scaleX(0.818);transform-origin:0 0;">File</div>
<div class="a" style="left:1240px;top:120px;font-size:13.5px;line-height:16px;color:#d8d8d8;transform:scaleX(0.860);transform-origin:0 0;">Edit</div>
<div class="a" style="left:1291px;top:120px;font-size:13.5px;line-height:16px;color:#d8d8d8;transform:scaleX(0.851);transform-origin:0 0;">View</div>
<div class="a" style="left:1347px;top:120px;font-size:13.5px;line-height:16px;color:#d8d8d8;transform:scaleX(0.813);transform-origin:0 0;">Packages</div>
<div class="a" style="left:1426px;top:120px;font-size:13.5px;line-height:16px;color:#d8d8d8;transform:scaleX(0.865);transform-origin:0 0;">Settings</div>
<div class="a" style="left:1500px;top:120px;font-size:13.5px;line-height:16px;color:#d8d8d8;transform:scaleX(0.879);transform-origin:0 0;">Help</div>
<div class="a" style="left:1556px;top:121px;width:15px;height:15px;border-radius:50%;background:#e4e4e4;color:#333;font-size:11px;font-weight:bold;text-align:center;line-height:15px">!</div>
<div class="a" style="left:1571px;top:121px;width:15px;height:15px;border-radius:50%;background:#7bd67b;color:#5ab05a;font-size:10px;text-align:center;line-height:15px">8</div>
<div class="a" style="left:1192px;top:150px"><svg width="140" height="18"><path d="M0 1h9l4 4v12H0Z" fill="#8a8a8a"/><path d="M38 5h7l2-3h6v4l2 0-3 11H38Z" fill="#8a8a8a"/><rect x="81" y="1" width="15" height="16" fill="none" stroke="#8a8a8a" stroke-width="2"/><rect x="84" y="2" width="9" height="5" fill="#8a8a8a"/><rect x="83" y="10" width="11" height="6" fill="none" stroke="#8a8a8a" stroke-width="1.5"/><path d="M122 6c6-2 12 2 14 9" stroke="#9a9a9a" stroke-width="3" fill="none"/><path d="M121 2l0 9 7-4z" fill="#9a9a9a"/></svg></div>
<div class="a" style="left:1352px;top:151px"><svg width="20" height="16"><path d="M18 13c-2-6-7-8-13-6" stroke="#4a4a4a" stroke-width="3" fill="none"/></svg></div>
<div class="a" style="left:2437px;top:150px"><svg width="22" height="16"><path d="M1 3h6l2-2h4l2 2h6v12H1Z" fill="#8a8a8a"/><circle cx="11" cy="9" r="3.5" fill="#353535"/></svg></div>
<div class="a" style="left:1175px;top:172px;width:203px;height:925px;background:#2b2b2b"></div>
<div class="a" style="left:1175px;top:172px;width:202px;height:27px;background:#3b3b3b"></div>
<div class="a" style="left:1180px;top:177px;font-size:14px;line-height:16px;color:#bdbdbd">Library</div>
<div class="a" style="left:1314px;top:179px"><svg width="54" height="14"><path d="M2 2v10" stroke="#999" stroke-width="1.5"/><path d="M10 3h9l-3.5 4v5h-2V7Z" fill="#555"/><path d="M29 2v10" stroke="#999" stroke-width="1.5"/><path d="M38 3h13M38 6h13M38 9h13M38 12h13" stroke="#555" stroke-width="1.5"/></svg></div>
<div class="a" style="left:1175px;top:199px;width:201px;height:40px;background:#555"></div>
<div class="a" style="left:1175px;top:204px;width:200px;height:30px;background:#fff"></div>
<div class="a" style="left:1185px;top:211px"><svg width="14" height="14"><circle cx="5.5" cy="5.5" r="4.2" stroke="#111" stroke-width="2" fill="none"/><path d="M8.5 8.5L12.5 12.5" stroke="#111" stroke-width="2.2"/></svg></div>
<div class="a" style="left:1207px;top:210px;font-size:14px;line-height:16px;color:#a8a8a8">Search...</div>
<div class="a" style="left:1177px;top:239px;width:198px;height:33px;background:#353535;border-bottom:1px solid #4a4a4a"></div>
<div class="a" style="left:1185px;top:249px;width:0;height:0;border-top:5px solid transparent;border-bottom:5px solid transparent;border-left:8px solid #999"></div>
<div class="a" style="left:1210px;top:246px"><svg width="18" height="18"><rect x="2" y="1" width="12" height="14" rx="1.5" fill="#bbb"/><path d="M4 4h8M4 6.5h8M4 12h8" stroke="#333" stroke-width="1.2"/></svg></div>
<div class="a" style="left:1237px;top:246px;font-size:13.5px;line-height:16px;color:#d2d2d2;transform:scaleX(0.980);transform-origin:0 0;">Dictionary</div>
<div class="a" style="left:1177px;top:272px;width:198px;height:33px;background:#353535;border-bottom:1px solid #4a4a4a"></div>
<div class="a" style="left:1185px;top:282px;width:0;height:0;border-top:5px solid transparent;border-bottom:5px solid transparent;border-left:8px solid #999"></div>
<div class="a" style="left:1210px;top:279px"><svg width="18" height="18"><circle cx="6" cy="6" r="4.5" stroke="#ccc" stroke-width="1.4" fill="none"/><path d="M9.5 9.5L14 14" stroke="#ccc" stroke-width="1.6"/></svg></div>
<div class="a" style="left:1237px;top:279px;font-size:13.5px;line-height:16px;color:#d2d2d2;transform:scaleX(0.980);transform-origin:0 0;">Display</div>
<div class="a" style="left:1177px;top:305px;width:198px;height:33px;background:#353535;border-bottom:1px solid #4a4a4a"></div>
<div class="a" style="left:1185px;top:315px;width:0;height:0;border-top:5px solid transparent;border-bottom:5px solid transparent;border-left:8px solid #999"></div>
<div class="a" style="left:1210px;top:312px"><svg width="18" height="18"><path d="M8 1L15 4V12L8 15L1 12V4Z" fill="#bbb"/><path d="M1 4L8 7L15 4M8 7V15" stroke="#333" stroke-width="1"/></svg></div>
<div class="a" style="left:1237px;top:312px;font-size:13.5px;line-height:16px;color:#d2d2d2;transform:scaleX(0.980);transform-origin:0 0;">Geometry</div>
<div class="a" style="left:1177px;top:338px;width:198px;height:33px;background:#353535;border-bottom:1px solid #4a4a4a"></div>
<div class="a" style="left:1185px;top:348px;width:0;height:0;border-top:5px solid transparent;border-bottom:5px solid transparent;border-left:8px solid #999"></div>
<div class="a" style="left:1210px;top:345px"><svg width="18" height="18"><path d="M2 5h11l-3-3M14 11H3l3 3" stroke="#ccc" stroke-width="1.4" fill="none"/></svg></div>
<div class="a" style="left:1237px;top:345px;font-size:13.5px;line-height:16px;color:#d2d2d2;transform:scaleX(0.980);transform-origin:0 0;">ImportExport</div>
<div class="a" style="left:1177px;top:371px;width:198px;height:33px;background:#353535;border-bottom:1px solid #4a4a4a"></div>
<div class="a" style="left:1185px;top:381px;width:0;height:0;border-top:5px solid transparent;border-bottom:5px solid transparent;border-left:8px solid #999"></div>
<div class="a" style="left:1210px;top:378px"><svg width="18" height="18"><path d="M3 13l1-4 7-7 3 3-7 7Z" fill="#ccc"/></svg></div>
<div class="a" style="left:1237px;top:378px;font-size:13.5px;line-height:16px;color:#d2d2d2;transform:scaleX(0.980);transform-origin:0 0;">Input</div>
<div class="a" style="left:1177px;top:404px;width:198px;height:33px;background:#353535;border-bottom:1px solid #4a4a4a"></div>
<div class="a" style="left:1185px;top:414px;width:0;height:0;border-top:5px solid transparent;border-bottom:5px solid transparent;border-left:8px solid #999"></div>
<div class="a" style="left:1210px;top:411px"><svg width="18" height="18"><path d="M1 3h2M1 8h2M1 13h2M5 3h10M5 8h10M5 13h10" stroke="#ccc" stroke-width="2"/></svg></div>
<div class="a" style="left:1237px;top:411px;font-size:13.5px;line-height:16px;color:#d2d2d2;transform:scaleX(0.980);transform-origin:0 0;">List</div>
<div class="a" style="left:1177px;top:437px;width:198px;height:33px;background:#353535;border-bottom:1px solid #4a4a4a"></div>
<div class="a" style="left:1185px;top:447px;width:0;height:0;border-top:5px solid transparent;border-bottom:5px solid transparent;border-left:8px solid #999"></div>
<div class="a" style="left:1210px;top:444px"><svg width="18" height="18"><text x="1" y="14" font-size="11" fill="#ccc" font-family="Liberation Serif" font-style="italic">x</text><text x="9" y="8" font-size="8" fill="#ccc" font-family="Liberation Sans">2</text></svg></div>
<div class="a" style="left:1237px;top:444px;font-size:13.5px;line-height:16px;color:#d2d2d2;transform:scaleX(0.980);transform-origin:0 0;">Math</div>
<div class="a" style="left:1177px;top:470px;width:198px;height:33px;background:#353535;border-bottom:1px solid #4a4a4a"></div>
<div class="a" style="left:1185px;top:480px;width:0;height:0;border-top:5px solid transparent;border-bottom:5px solid transparent;border-left:8px solid #999"></div>
<div class="a" style="left:1210px;top:477px"><svg width="18" height="18"><text x="1" y="15" font-size="17" font-weight="bold" fill="#ddd" font-family="Liberation Sans">R</text></svg></div>
<div class="a" style="left:1237px;top:477px;font-size:13.5px;line-height:16px;color:#d2d2d2;transform:scaleX(0.980);transform-origin:0 0;">Revit</div>
<div class="a" style="left:1177px;top:503px;width:198px;height:33px;background:#353535;border-bottom:1px solid #4a4a4a"></div>
<div class="a" style="left:1185px;top:513px;width:0;height:0;border-top:5px solid transparent;border-bottom:5px solid transparent;border-left:8px solid #999"></div>
<div class="a" style="left:1210px;top:510px"><svg width="18" height="18"><text x="0" y="13" font-size="11" fill="#ccc" font-family="Liberation Sans">&lt;/&gt;</text></svg></div>
<div class="a" style="left:1237px;top:510px;font-size:13.5px;line-height:16px;color:#d2d2d2;transform:scaleX(0.980);transform-origin:0 0;">Script</div>
<div class="a" style="left:1177px;top:536px;width:198px;height:33px;background:#353535;border-bottom:1px solid #4a4a4a"></div>
<div class="a" style="left:1185px;top:546px;width:0;height:0;border-top:5px solid transparent;border-bottom:5px solid transparent;border-left:8px solid #999"></div>
<div class="a" style="left:1210px;top:543px"><svg width="18" height="18"><text x="0" y="14" font-size="13" fill="#ccc" font-family="Liberation Serif">Ab</text></svg></div>
<div class="a" style="left:1237px;top:543px;font-size:13.5px;line-height:16px;color:#d2d2d2;transform:scaleX(0.980);transform-origin:0 0;">String</div>
<div class="a" style="left:1175px;top:569px;width:200px;height:41px;background:#474747"></div>
<div class="a" style="left:1180px;top:580px;font-size:15px;line-height:17px;color:#a9a9a9">Add-ons</div>
<div class="a" style="left:1345px;top:582px"><svg width="14" height="14"><path d="M7 0V14M0 7H14" stroke="#4a86b0" stroke-width="1.5"/></svg></div>
<div class="a" style="left:1175px;top:610px;width:200px;height:12px;background:#2e2a2c"></div>
<div class="a" style="left:1378px;top:172px;width:1098px;height:22px;background:#1e1e1e"></div>
<div class="a" style="left:1378px;top:172px;width:251px;height:22px;background:#343434"></div>
<div class="a" style="left:1387px;top:176px;font-size:12.5px;line-height:15px;color:#dcdcdc;font-weight:bold;transform:scaleX(0.888);transform-origin:0 0;">CLASHES_VISUALISE.dyn*</div>
<div class="a" style="left:1613px;top:178px"><svg width="10" height="10"><path d="M1 1L9 9M9 1L1 9" stroke="#8a8a8a" stroke-width="1.5"/></svg></div>
<div class="a" style="left:2458px;top:178px"><svg width="12" height="12"><path d="M0 2h12M0 6h12M0 10h12" stroke="#888" stroke-width="1.5"/></svg></div>
<svg class="a" style="left:1378px;top:194px" width="1098" height="855" viewBox="1378 194 1098 855">
<rect x="1378" y="194" width="1098" height="855" fill="#f7f7f7"/>
<rect x="1510" y="323" width="58" height="61" fill="#d8b8e3"/>
<text x="1512" y="335" font-size="13" fill="#222" font-family="Liberation Sans">Arkusz</text>
<rect x="1398" y="389" width="712" height="139" fill="#cfeafa"/>
<text x="1400" y="404" font-size="15" fill="#111" font-family="Liberation Sans">Get Excell</text>
<rect x="2131" y="211" width="81" height="206" fill="#9dd3f6" stroke="#6cb2e4" stroke-width="1"/>
<text x="2133" y="225" font-size="15" fill="#111" font-family="Liberation Sans">Get&#160;&#160;right</text>
<text x="2133" y="243" font-size="15" fill="#111" font-family="Liberation Sans">Columns</text>
<rect x="1898" y="597" width="184" height="460" fill="#f8b7d2"/>
<rect x="2285" y="194" width="191" height="84" fill="#d9e6b5"/>
<rect x="2285" y="284" width="191" height="73" fill="#d9e6b5"/>
<rect x="2285" y="363" width="191" height="74" fill="#d9e6b5"/>
<rect x="2285" y="444" width="191" height="73" fill="#d9e6b5"/>
<rect x="2285" y="533" width="191" height="73" fill="#d9e6b5"/>
<rect x="2285" y="682" width="191" height="216" fill="#d9e6b5"/>
<text x="2287" y="695" font-size="13" fill="#111" font-family="Liberation Sans">x,y,z</text>
<path d="M1563 362 C1700 360 1800 300 1838 194" stroke="#3a3a3a" stroke-width="1.3" fill="none"/>
<path d="M1563 362 C1600 362 1600 420 1608 440 C1615 460 1625 450 1630 458" stroke="#3a3a3a" stroke-width="1.3" fill="none"/>
<path d="M1518 432 L1538 432" stroke="#3a3a3a" stroke-width="1.3" fill="none"/>
<path d="M1587 432 L1630 432" stroke="#3a3a3a" stroke-width="1.3" fill="none"/>
<path d="M1592 470 C1610 470 1610 456 1630 456" stroke="#3a3a3a" stroke-width="1.3" fill="none"/>
<path d="M1883 433 L2024 434" stroke="#3a3a3a" stroke-width="1.3" fill="none"/>
<path d="M1883 433 C1950 430 2100 350 2150 290" stroke="#3a3a3a" stroke-width="1.3" fill="none"/>
<path d="M2005 464 C2015 464 2015 440 2024 440" stroke="#3a3a3a" stroke-width="1.3" fill="none"/>
<path d="M2006 505 C2015 505 2010 450 2024 450" stroke="#3a3a3a" stroke-width="1.3" fill="none"/>
<path d="M2006 505 C2080 500 2100 470 2130 440 C2160 400 2190 330 2215 285" stroke="#3a3a3a" stroke-width="1.3" fill="none"/>
<path d="M2105 434 C2150 434 2180 420 2200 400 C2220 380 2240 300 2290 250" stroke="#3a3a3a" stroke-width="1.3" fill="none"/>
<path d="M2105 434 C2120 434 2125 450 2110 470 C2080 520 1990 560 1930 615" stroke="#3a3a3a" stroke-width="1.3" fill="none"/>
<path d="M2105 470 C2140 450 2190 340 2230 260 C2250 220 2260 200 2270 194" stroke="#3a3a3a" stroke-width="1.3" fill="none"/>
<path d="M2356 247 L2370 244" stroke="#3a3a3a" stroke-width="1.3" fill="none"/>
<path d="M2337 258 L2370 252" stroke="#3a3a3a" stroke-width="1.3" fill="none"/>
<path d="M2337 262 L2370 260" stroke="#3a3a3a" stroke-width="1.3" fill="none"/>
<path d="M2355 332 C2380 332 2380 326 2403 326" stroke="#3a3a3a" stroke-width="1.3" fill="none"/>
<path d="M2355 342 L2403 340" stroke="#3a3a3a" stroke-width="1.3" fill="none"/>
<path d="M2383 410 L2401 406" stroke="#3a3a3a" stroke-width="1.3" fill="none"/>
<path d="M2383 420 L2401 418" stroke="#3a3a3a" stroke-width="1.3" fill="none"/>
<path d="M2357 490 L2402 486" stroke="#3a3a3a" stroke-width="1.3" fill="none"/>
<path d="M2357 498 L2402 498" stroke="#3a3a3a" stroke-width="1.3" fill="none"/>
<path d="M2356 578 L2403 574" stroke="#3a3a3a" stroke-width="1.3" fill="none"/>
<path d="M2356 586 L2403 586" stroke="#3a3a3a" stroke-width="1.3" fill="none"/>
<path d="M2342 733 L2361 730" stroke="#3a3a3a" stroke-width="1.3" fill="none"/>
<path d="M2342 742 L2361 742" stroke="#3a3a3a" stroke-width="1.3" fill="none"/>
<path d="M2347 787 L2366 784" stroke="#3a3a3a" stroke-width="1.3" fill="none"/>
<path d="M2347 796 L2366 796" stroke="#3a3a3a" stroke-width="1.3" fill="none"/>
<path d="M2349 857 L2367 853" stroke="#3a3a3a" stroke-width="1.3" fill="none"/>
<path d="M2349 865 L2367 866" stroke="#3a3a3a" stroke-width="1.3" fill="none"/>
<path d="M2444 735 L2470 735" stroke="#3a3a3a" stroke-width="1.3" fill="none"/>
<path d="M2449 788 L2470 788" stroke="#3a3a3a" stroke-width="1.3" fill="none"/>
<path d="M2450 857 L2470 857" stroke="#3a3a3a" stroke-width="1.3" fill="none"/>
<path d="M2225 290 C2260 240 2280 230 2301 245" stroke="#3a3a3a" stroke-width="1.3" fill="none"/>
<path d="M1828 432 C1950 420 2050 270 2136 274" stroke="#3d8fd8" stroke-width="1.2" fill="none" opacity="0.9"/>
<path d="M1731 433 L1758 433" stroke="#3d8fd8" stroke-width="1.2" fill="none" opacity="0.9"/>
<path d="M2207 275 C2252 275 2235 247 2290 247" stroke="#3d8fd8" stroke-width="1.2" fill="none" opacity="0.9"/>
<path d="M2170 395 C2215 395 2235 247 2290 247" stroke="#3d8fd8" stroke-width="1.2" fill="none" opacity="0.9"/>
<path d="M2207 275 C2252 275 2246 258 2301 258" stroke="#3d8fd8" stroke-width="1.2" fill="none" opacity="0.9"/>
<path d="M2170 395 C2215 395 2246 258 2301 258" stroke="#3d8fd8" stroke-width="1.2" fill="none" opacity="0.9"/>
<path d="M2207 275 C2252 275 2235 332 2290 332" stroke="#3d8fd8" stroke-width="1.2" fill="none" opacity="0.9"/>
<path d="M2170 395 C2215 395 2235 332 2290 332" stroke="#3d8fd8" stroke-width="1.2" fill="none" opacity="0.9"/>
<path d="M2207 275 C2252 275 2235 410 2290 410" stroke="#3d8fd8" stroke-width="1.2" fill="none" opacity="0.9"/>
<path d="M2170 395 C2215 395 2235 410 2290 410" stroke="#3d8fd8" stroke-width="1.2" fill="none" opacity="0.9"/>
<path d="M2207 275 C2252 275 2235 490 2290 490" stroke="#3d8fd8" stroke-width="1.2" fill="none" opacity="0.9"/>
<path d="M2170 395 C2215 395 2235 490 2290 490" stroke="#3d8fd8" stroke-width="1.2" fill="none" opacity="0.9"/>
<path d="M2207 275 C2252 275 2236 578 2291 578" stroke="#3d8fd8" stroke-width="1.2" fill="none" opacity="0.9"/>
<path d="M2170 395 C2215 395 2236 578 2291 578" stroke="#3d8fd8" stroke-width="1.2" fill="none" opacity="0.9"/>
<path d="M2207 275 C2252 275 2234 733 2289 733" stroke="#3d8fd8" stroke-width="1.2" fill="none" opacity="0.9"/>
<path d="M2170 395 C2215 395 2234 733 2289 733" stroke="#3d8fd8" stroke-width="1.2" fill="none" opacity="0.9"/>
<path d="M2207 275 C2252 275 2238 787 2293 787" stroke="#3d8fd8" stroke-width="1.2" fill="none" opacity="0.9"/>
<path d="M2170 395 C2215 395 2238 787 2293 787" stroke="#3d8fd8" stroke-width="1.2" fill="none" opacity="0.9"/>
<path d="M2207 275 C2252 275 2240 857 2295 857" stroke="#3d8fd8" stroke-width="1.2" fill="none" opacity="0.9"/>
<path d="M2170 395 C2215 395 2240 857 2295 857" stroke="#3d8fd8" stroke-width="1.2" fill="none" opacity="0.9"/>
<path d="M2207 275 C2252 275 2190 194 2245 194" stroke="#3d8fd8" stroke-width="1.2" fill="none" opacity="0.9"/>
<path d="M2170 395 C2215 395 2190 194 2245 194" stroke="#3d8fd8" stroke-width="1.2" fill="none" opacity="0.9"/>
<path d="M2207 275 C2252 275 2197 194 2252 194" stroke="#3d8fd8" stroke-width="1.2" fill="none" opacity="0.9"/>
<path d="M2170 395 C2215 395 2197 194 2252 194" stroke="#3d8fd8" stroke-width="1.2" fill="none" opacity="0.9"/>
<path d="M2207 275 C2252 275 2203 194 2258 194" stroke="#3d8fd8" stroke-width="1.2" fill="none" opacity="0.9"/>
<path d="M2170 395 C2215 395 2203 194 2258 194" stroke="#3d8fd8" stroke-width="1.2" fill="none" opacity="0.9"/>
<path d="M2207 275 C2252 275 2210 194 2265 194" stroke="#3d8fd8" stroke-width="1.2" fill="none" opacity="0.9"/>
<path d="M2170 395 C2215 395 2210 194 2265 194" stroke="#3d8fd8" stroke-width="1.2" fill="none" opacity="0.9"/>
<path d="M2207 275 C2252 275 2217 194 2272 194" stroke="#3d8fd8" stroke-width="1.2" fill="none" opacity="0.9"/>
<path d="M2170 395 C2215 395 2217 194 2272 194" stroke="#3d8fd8" stroke-width="1.2" fill="none" opacity="0.9"/>
<path d="M2207 275 C2252 275 2225 194 2280 194" stroke="#3d8fd8" stroke-width="1.2" fill="none" opacity="0.9"/>
<path d="M2170 395 C2215 395 2225 194 2280 194" stroke="#3d8fd8" stroke-width="1.2" fill="none" opacity="0.9"/>
<path d="M2207 275 C2252 275 2315 244 2370 244" stroke="#3d8fd8" stroke-width="1.2" fill="none" opacity="0.9"/>
<path d="M2170 395 C2215 395 2315 244 2370 244" stroke="#3d8fd8" stroke-width="1.2" fill="none" opacity="0.9"/>
<path d="M2207 275 C2252 275 2315 252 2370 252" stroke="#3d8fd8" stroke-width="1.2" fill="none" opacity="0.9"/>
<path d="M2170 395 C2215 395 2315 252 2370 252" stroke="#3d8fd8" stroke-width="1.2" fill="none" opacity="0.9"/>
<path d="M2207 275 C2252 275 2348 326 2403 326" stroke="#3d8fd8" stroke-width="1.2" fill="none" opacity="0.9"/>
<path d="M2170 395 C2215 395 2348 326 2403 326" stroke="#3d8fd8" stroke-width="1.2" fill="none" opacity="0.9"/>
<path d="M2207 275 C2252 275 2348 340 2403 340" stroke="#3d8fd8" stroke-width="1.2" fill="none" opacity="0.9"/>
<path d="M2170 395 C2215 395 2348 340 2403 340" stroke="#3d8fd8" stroke-width="1.2" fill="none" opacity="0.9"/>
<path d="M2207 275 C2247 275 2232 235 2232 194" stroke="#3d8fd8" stroke-width="1.2" fill="none" opacity="0.9"/>
<path d="M2207 275 C2247 275 2241 235 2241 194" stroke="#3d8fd8" stroke-width="1.2" fill="none" opacity="0.9"/>
<path d="M2207 275 C2247 275 2250 235 2250 194" stroke="#3d8fd8" stroke-width="1.2" fill="none" opacity="0.9"/>
<path d="M2207 275 C2247 275 2259 235 2259 194" stroke="#3d8fd8" stroke-width="1.2" fill="none" opacity="0.9"/>
<path d="M2207 275 C2247 275 2268 235 2268 194" stroke="#3d8fd8" stroke-width="1.2" fill="none" opacity="0.9"/>
<path d="M2207 275 C2247 275 2277 235 2277 194" stroke="#3d8fd8" stroke-width="1.2" fill="none" opacity="0.9"/>
<path d="M2170 395 C2210 395 2232 355 2232 194" stroke="#3d8fd8" stroke-width="1.2" fill="none" opacity="0.9"/>
<path d="M2170 395 C2210 395 2241 355 2241 194" stroke="#3d8fd8" stroke-width="1.2" fill="none" opacity="0.9"/>
<path d="M2170 395 C2210 395 2250 355 2250 194" stroke="#3d8fd8" stroke-width="1.2" fill="none" opacity="0.9"/>
<path d="M2170 395 C2210 395 2259 355 2259 194" stroke="#3d8fd8" stroke-width="1.2" fill="none" opacity="0.9"/>
<path d="M2170 395 C2210 395 2268 355 2268 194" stroke="#3d8fd8" stroke-width="1.2" fill="none" opacity="0.9"/>
<path d="M2170 395 C2210 395 2277 355 2277 194" stroke="#3d8fd8" stroke-width="1.2" fill="none" opacity="0.9"/>
<path d="M2320 600 C2340 680 2400 720 2476 740" stroke="#3d8fd8" stroke-width="1.2" fill="none" opacity="0.9"/>
<path d="M2330 520 C2380 560 2430 560 2476 590" stroke="#3d8fd8" stroke-width="1.2" fill="none" opacity="0.9"/>
<path d="M2250 194 C2240 450 2200 560 2215 650 C2225 710 2250 733 2289 733" stroke="#3d8fd8" stroke-width="1.2" fill="none" opacity="0.9"/>
<path d="M2258 194 C2245 450 2205 600 2210 700 C2215 770 2250 787 2293 787" stroke="#3d8fd8" stroke-width="1.2" fill="none" opacity="0.9"/>
<path d="M2266 194 C2250 450 2200 650 2205 760 C2210 840 2250 857 2295 857" stroke="#3d8fd8" stroke-width="1.2" fill="none" opacity="0.9"/>
<path d="M2300 194 C2290 300 2300 500 2330 600 C2350 650 2380 700 2420 715" stroke="#3d8fd8" stroke-width="1.2" fill="none" opacity="0.9"/>
<path d="M2310 194 C2300 300 2310 520 2350 620 C2370 680 2420 740 2476 760" stroke="#3d8fd8" stroke-width="1.2" fill="none" opacity="0.9"/>
<path d="M2290 600 C2300 660 2330 700 2380 730 C2420 750 2450 755 2476 755" stroke="#3d8fd8" stroke-width="1.2" fill="none" opacity="0.9"/>
<rect x="1514" y="346" width="49" height="33" fill="#cfcac2" stroke="#a9a59f" stroke-width="0.8"/>
<rect x="1514" y="346" width="49" height="11" fill="#5a5654"/>
<rect x="1518" y="359" width="37" height="10" fill="#e7e4df"/>
<text x="1521" y="366" font-size="6.5" fill="#7a5a8a" font-family="Liberation Mono">"Arkusz1";</text>
<rect x="1402" y="415" width="116" height="35" fill="#cfcac2" stroke="#a9a59f" stroke-width="0.8"/>
<rect x="1402" y="415" width="116" height="11" fill="#5a5654"/>
<rect x="1404" y="427" width="100" height="12" fill="#eceae6"/><text x="1404" y="446" font-size="5" fill="#333" font-family="Liberation Sans">E:\...\05_Koordynacja\10.12.2020\Test2.xlsx</text>
<rect x="1538" y="415" width="49" height="35" fill="#cfcac2" stroke="#a9a59f" stroke-width="0.8"/>
<rect x="1538" y="415" width="49" height="11" fill="#5a5654"/>
<rect x="1540" y="427" width="14" height="10" fill="#e7e4df"/><rect x="1570" y="427" width="15" height="10" fill="#e7e4df"/>
<rect x="1557" y="456" width="35" height="38" fill="#cfcac2" stroke="#a9a59f" stroke-width="0.8"/>
<rect x="1557" y="456" width="35" height="11" fill="#5a5654"/>
<rect x="1561" y="469" width="23" height="18" fill="#e7e4df"/>
<text x="1564" y="476" font-size="6.5" fill="#7a5a8a" font-family="Liberation Mono">true;</text>
<text x="1564" y="484" font-size="6.5" fill="#7a5a8a" font-family="Liberation Mono">false;</text>
<rect x="1630" y="416" width="101" height="68" fill="#cfcac2" stroke="#a9a59f" stroke-width="0.8"/>
<rect x="1630" y="416" width="101" height="11" fill="#5a5654"/>
<rect x="1631" y="428.0" width="58.58" height="6.5" fill="#e7e4df"/>
<path d="M1682.58 429.5l2.5 2l-2.5 2" stroke="#333" fill="none" stroke-width="1"/>
<rect x="1631" y="435.5" width="58.58" height="6.5" fill="#e7e4df"/>
<path d="M1682.58 437.0l2.5 2l-2.5 2" stroke="#333" fill="none" stroke-width="1"/>
<rect x="1631" y="443.0" width="58.58" height="6.5" fill="#e7e4df"/>
<path d="M1682.58 444.5l2.5 2l-2.5 2" stroke="#333" fill="none" stroke-width="1"/>
<rect x="1631" y="450.5" width="58.58" height="6.5" fill="#e7e4df"/>
<path d="M1682.58 452.0l2.5 2l-2.5 2" stroke="#333" fill="none" stroke-width="1"/>
<rect x="1710.8" y="428" width="19.200000000000003" height="7" fill="#e7e4df"/>
<rect x="1758" y="417" width="70" height="33" fill="#cfcac2" stroke="#a9a59f" stroke-width="0.8"/>
<rect x="1758" y="417" width="70" height="11" fill="#5a5654"/>
<rect x="1759" y="429.0" width="40.599999999999994" height="6.5" fill="#e7e4df"/>
<path d="M1792.6 430.5l2.5 2l-2.5 2" stroke="#333" fill="none" stroke-width="1"/>
<rect x="1814.0" y="429" width="13.0" height="7" fill="#e7e4df"/>
<rect x="1849" y="416" width="34" height="34" fill="#cfcac2" stroke="#a9a59f" stroke-width="0.8"/>
<rect x="1849" y="416" width="34" height="11" fill="#5a5654"/>
<rect x="1851" y="428" width="8" height="10" fill="#e7e4df"/><rect x="1873" y="428" width="8" height="10" fill="#e7e4df"/><rect x="1851" y="441" width="30" height="6" fill="#e7e4df"/>
<rect x="1970" y="448" width="35" height="33" fill="#cfcac2" stroke="#a9a59f" stroke-width="0.8"/>
<rect x="1970" y="448" width="35" height="11" fill="#5a5654"/>
<rect x="1974" y="461" width="23" height="10" fill="#e7e4df"/>
<text x="1977" y="468" font-size="6.5" fill="#7a5a8a" font-family="Liberation Mono">6;</text>
<rect x="1972" y="489" width="34" height="33" fill="#cfcac2" stroke="#a9a59f" stroke-width="0.8"/>
<rect x="1972" y="489" width="34" height="11" fill="#5a5654"/>
<rect x="1976" y="502" width="22" height="10" fill="#e7e4df"/>
<text x="1979" y="509" font-size="6.5" fill="#7a5a8a" font-family="Liberation Mono">-5;</text>
<rect x="2024" y="417" width="81" height="57" fill="#cfcac2" stroke="#a9a59f" stroke-width="0.8"/>
<rect x="2024" y="417" width="81" height="11" fill="#5a5654"/>
<rect x="2025" y="429.0" width="46.98" height="6.5" fill="#e7e4df"/>
<path d="M2064.98 430.5l2.5 2l-2.5 2" stroke="#333" fill="none" stroke-width="1"/>
<rect x="2025" y="436.5" width="46.98" height="6.5" fill="#e7e4df"/>
<path d="M2064.98 438.0l2.5 2l-2.5 2" stroke="#333" fill="none" stroke-width="1"/>
<rect x="2025" y="444.0" width="46.98" height="6.5" fill="#e7e4df"/>
<path d="M2064.98 445.5l2.5 2l-2.5 2" stroke="#333" fill="none" stroke-width="1"/>
<rect x="2088.8" y="429" width="15.2" height="7" fill="#e7e4df"/>
<rect x="2136" y="255" width="71" height="34" fill="#cfcac2" stroke="#a9a59f" stroke-width="0.8"/>
<rect x="2136" y="255" width="71" height="11" fill="#5a5654"/>
<rect x="2137" y="267.0" width="41.18" height="6.5" fill="#e7e4df"/>
<path d="M2171.18 268.5l2.5 2l-2.5 2" stroke="#333" fill="none" stroke-width="1"/>
<rect x="2192.8" y="267" width="13.200000000000001" height="7" fill="#e7e4df"/>
<rect x="2136" y="377" width="34" height="35" fill="#cfcac2" stroke="#a9a59f" stroke-width="0.8"/>
<rect x="2136" y="377" width="34" height="11" fill="#5a5654"/>
<rect x="2138" y="389" width="8" height="10" fill="#e7e4df"/><rect x="2160" y="389" width="8" height="10" fill="#e7e4df"/><rect x="2138" y="402" width="30" height="6" fill="#e7e4df"/>
<rect x="1902" y="612" width="35" height="20" fill="#cfcac2" stroke="#a9a59f" stroke-width="0.8"/>
<rect x="1902" y="612" width="35" height="11" fill="#5a5654"/>
<rect x="1953" y="612" width="78" height="20" fill="#cfcac2" stroke="#a9a59f" stroke-width="0.8"/>
<rect x="1953" y="612" width="78" height="11" fill="#5a5654"/>
<rect x="2043" y="610" width="35" height="20" fill="#cfcac2" stroke="#a9a59f" stroke-width="0.8"/>
<rect x="2043" y="610" width="35" height="11" fill="#5a5654"/>
<rect x="2291" y="194" width="65" height="15" fill="#cfcac2" stroke="#a9a59f" stroke-width="0.8"/>
<rect x="2291" y="194" width="65" height="0" fill="#5a5654"/>
<rect x="2295" y="196" width="53" height="10" fill="#e7e4df"/>
<text x="2298" y="203" font-size="6.5" fill="#7a5a8a" font-family="Liberation Mono">true;</text>
<rect x="2363" y="194" width="105" height="9" fill="#cfcac2" stroke="#a9a59f" stroke-width="0.8"/>
<rect x="2363" y="194" width="105" height="0" fill="#5a5654"/>
<rect x="2301" y="236" width="36" height="37" fill="#cfcac2" stroke="#a9a59f" stroke-width="0.8"/>
<rect x="2301" y="236" width="36" height="11" fill="#5a5654"/>
<rect x="2305" y="249" width="24" height="18" fill="#e7e4df"/>
<text x="2308" y="256" font-size="6.5" fill="#7a5a8a" font-family="Liberation Mono">n;</text>
<text x="2308" y="264" font-size="6.5" fill="#7a5a8a" font-family="Liberation Mono"> a-1;</text>
<rect x="2370" y="230" width="82" height="45" fill="#cfcac2" stroke="#a9a59f" stroke-width="0.8"/>
<rect x="2370" y="230" width="82" height="11" fill="#5a5654"/>
<rect x="2371" y="242.0" width="47.559999999999995" height="6.5" fill="#e7e4df"/>
<path d="M2411.56 243.5l2.5 2l-2.5 2" stroke="#333" fill="none" stroke-width="1"/>
<rect x="2371" y="249.5" width="47.559999999999995" height="6.5" fill="#e7e4df"/>
<path d="M2411.56 251.0l2.5 2l-2.5 2" stroke="#333" fill="none" stroke-width="1"/>
<rect x="2371" y="257.0" width="47.559999999999995" height="6.5" fill="#e7e4df"/>
<path d="M2411.56 258.5l2.5 2l-2.5 2" stroke="#333" fill="none" stroke-width="1"/>
<rect x="2435.6" y="242" width="15.400000000000002" height="7" fill="#e7e4df"/>
<rect x="2290" y="316" width="65" height="36" fill="#cfcac2" stroke="#a9a59f" stroke-width="0.8"/>
<rect x="2290" y="316" width="65" height="11" fill="#5a5654"/>
<rect x="2294" y="329" width="53" height="18" fill="#e7e4df"/>
<text x="2297" y="336" font-size="6.5" fill="#7a5a8a" font-family="Liberation Mono">a == "guid";</text>
<text x="2297" y="344" font-size="6.5" fill="#7a5a8a" font-family="Liberation Mono">true;</text>
<rect x="2403" y="309" width="73" height="45" fill="#cfcac2" stroke="#a9a59f" stroke-width="0.8"/>
<rect x="2403" y="309" width="73" height="11" fill="#5a5654"/>
<rect x="2404" y="321.0" width="42.339999999999996" height="6.5" fill="#e7e4df"/>
<path d="M2439.34 322.5l2.5 2l-2.5 2" stroke="#333" fill="none" stroke-width="1"/>
<rect x="2404" y="328.5" width="42.339999999999996" height="6.5" fill="#e7e4df"/>
<path d="M2439.34 330.0l2.5 2l-2.5 2" stroke="#333" fill="none" stroke-width="1"/>
<rect x="2461.4" y="321" width="13.600000000000001" height="7" fill="#e7e4df"/>
<rect x="2290" y="394" width="93" height="36" fill="#cfcac2" stroke="#a9a59f" stroke-width="0.8"/>
<rect x="2290" y="394" width="93" height="11" fill="#5a5654"/>
<rect x="2294" y="407" width="81" height="18" fill="#e7e4df"/>
<text x="2297" y="414" font-size="6.5" fill="#7a5a8a" font-family="Liberation Mono">a == "gridlocation";</text>
<text x="2297" y="422" font-size="6.5" fill="#7a5a8a" font-family="Liberation Mono">true;</text>
<rect x="2401" y="390" width="75" height="42" fill="#cfcac2" stroke="#a9a59f" stroke-width="0.8"/>
<rect x="2401" y="390" width="75" height="11" fill="#5a5654"/>
<rect x="2402" y="402.0" width="43.5" height="6.5" fill="#e7e4df"/>
<path d="M2438.5 403.5l2.5 2l-2.5 2" stroke="#333" fill="none" stroke-width="1"/>
<rect x="2402" y="409.5" width="43.5" height="6.5" fill="#e7e4df"/>
<path d="M2438.5 411.0l2.5 2l-2.5 2" stroke="#333" fill="none" stroke-width="1"/>
<rect x="2461.0" y="402" width="14.0" height="7" fill="#e7e4df"/>
<rect x="2290" y="474" width="67" height="38" fill="#cfcac2" stroke="#a9a59f" stroke-width="0.8"/>
<rect x="2290" y="474" width="67" height="11" fill="#5a5654"/>
<rect x="2294" y="487" width="55" height="18" fill="#e7e4df"/>
<text x="2297" y="494" font-size="6.5" fill="#7a5a8a" font-family="Liberation Mono">a == "layer";</text>
<text x="2297" y="502" font-size="6.5" fill="#7a5a8a" font-family="Liberation Mono">true;</text>
<rect x="2402" y="470" width="74" height="44" fill="#cfcac2" stroke="#a9a59f" stroke-width="0.8"/>
<rect x="2402" y="470" width="74" height="11" fill="#5a5654"/>
<rect x="2403" y="482.0" width="42.919999999999995" height="6.5" fill="#e7e4df"/>
<path d="M2438.92 483.5l2.5 2l-2.5 2" stroke="#333" fill="none" stroke-width="1"/>
<rect x="2403" y="489.5" width="42.919999999999995" height="6.5" fill="#e7e4df"/>
<path d="M2438.92 491.0l2.5 2l-2.5 2" stroke="#333" fill="none" stroke-width="1"/>
<rect x="2461.2" y="482" width="13.8" height="7" fill="#e7e4df"/>
<rect x="2291" y="563" width="65" height="37" fill="#cfcac2" stroke="#a9a59f" stroke-width="0.8"/>
<rect x="2291" y="563" width="65" height="11" fill="#5a5654"/>
<rect x="2295" y="576" width="53" height="18" fill="#e7e4df"/>
<text x="2298" y="583" font-size="6.5" fill="#7a5a8a" font-family="Liberation Mono">a == "href";</text>
<text x="2298" y="591" font-size="6.5" fill="#7a5a8a" font-family="Liberation Mono">true;</text>
<rect x="2403" y="558" width="73" height="45" fill="#cfcac2" stroke="#a9a59f" stroke-width="0.8"/>
<rect x="2403" y="558" width="73" height="11" fill="#5a5654"/>
<rect x="2404" y="570.0" width="42.339999999999996" height="6.5" fill="#e7e4df"/>
<path d="M2439.34 571.5l2.5 2l-2.5 2" stroke="#333" fill="none" stroke-width="1"/>
<rect x="2404" y="577.5" width="42.339999999999996" height="6.5" fill="#e7e4df"/>
<path d="M2439.34 579.0l2.5 2l-2.5 2" stroke="#333" fill="none" stroke-width="1"/>
<rect x="2461.4" y="570" width="13.600000000000001" height="7" fill="#e7e4df"/>
<rect x="2289" y="718" width="53" height="37" fill="#cfcac2" stroke="#a9a59f" stroke-width="0.8"/>
<rect x="2289" y="718" width="53" height="11" fill="#5a5654"/>
<rect x="2293" y="731" width="41" height="18" fill="#e7e4df"/>
<text x="2296" y="738" font-size="6.5" fill="#7a5a8a" font-family="Liberation Mono">a == "x";</text>
<text x="2296" y="746" font-size="6.5" fill="#7a5a8a" font-family="Liberation Mono">true;</text>
<rect x="2361" y="715" width="83" height="45" fill="#cfcac2" stroke="#a9a59f" stroke-width="0.8"/>
<rect x="2361" y="715" width="83" height="11" fill="#5a5654"/>
<rect x="2362" y="727.0" width="48.13999999999999" height="6.5" fill="#e7e4df"/>
<path d="M2403.14 728.5l2.5 2l-2.5 2" stroke="#333" fill="none" stroke-width="1"/>
<rect x="2362" y="734.5" width="48.13999999999999" height="6.5" fill="#e7e4df"/>
<path d="M2403.14 736.0l2.5 2l-2.5 2" stroke="#333" fill="none" stroke-width="1"/>
<rect x="2427.4" y="727" width="15.600000000000001" height="7" fill="#e7e4df"/>
<rect x="2293" y="771" width="54" height="39" fill="#cfcac2" stroke="#a9a59f" stroke-width="0.8"/>
<rect x="2293" y="771" width="54" height="11" fill="#5a5654"/>
<rect x="2297" y="784" width="42" height="18" fill="#e7e4df"/>
<text x="2300" y="791" font-size="6.5" fill="#7a5a8a" font-family="Liberation Mono">a == "y";</text>
<text x="2300" y="799" font-size="6.5" fill="#7a5a8a" font-family="Liberation Mono">true;</text>
<rect x="2366" y="768" width="83" height="45" fill="#cfcac2" stroke="#a9a59f" stroke-width="0.8"/>
<rect x="2366" y="768" width="83" height="11" fill="#5a5654"/>
<rect x="2367" y="780.0" width="48.13999999999999" height="6.5" fill="#e7e4df"/>
<path d="M2408.14 781.5l2.5 2l-2.5 2" stroke="#333" fill="none" stroke-width="1"/>
<rect x="2367" y="787.5" width="48.13999999999999" height="6.5" fill="#e7e4df"/>
<path d="M2408.14 789.0l2.5 2l-2.5 2" stroke="#333" fill="none" stroke-width="1"/>
<rect x="2432.4" y="780" width="15.600000000000001" height="7" fill="#e7e4df"/>
<rect x="2295" y="840" width="54" height="38" fill="#cfcac2" stroke="#a9a59f" stroke-width="0.8"/>
<rect x="2295" y="840" width="54" height="11" fill="#5a5654"/>
<rect x="2299" y="853" width="42" height="18" fill="#e7e4df"/>
<text x="2302" y="860" font-size="6.5" fill="#7a5a8a" font-family="Liberation Mono">a == "z";</text>
<text x="2302" y="868" font-size="6.5" fill="#7a5a8a" font-family="Liberation Mono">true;</text>
<rect x="2367" y="837" width="83" height="46" fill="#cfcac2" stroke="#a9a59f" stroke-width="0.8"/>
<rect x="2367" y="837" width="83" height="11" fill="#5a5654"/>
<rect x="2368" y="849.0" width="48.13999999999999" height="6.5" fill="#e7e4df"/>
<path d="M2409.14 850.5l2.5 2l-2.5 2" stroke="#333" fill="none" stroke-width="1"/>
<rect x="2368" y="856.5" width="48.13999999999999" height="6.5" fill="#e7e4df"/>
<path d="M2409.14 858.0l2.5 2l-2.5 2" stroke="#333" fill="none" stroke-width="1"/>
<rect x="2433.4" y="849" width="15.600000000000001" height="7" fill="#e7e4df"/>
<rect x="2468" y="705" width="10" height="45" fill="#cfcac2" stroke="#a9a59f" stroke-width="0.8"/>
<rect x="2468" y="705" width="10" height="11" fill="#5a5654"/>
<rect x="2470" y="760" width="8" height="40" fill="#cfcac2" stroke="#a9a59f" stroke-width="0.8"/>
<rect x="2470" y="760" width="8" height="11" fill="#5a5654"/>
<rect x="2472" y="828" width="6" height="40" fill="#cfcac2" stroke="#a9a59f" stroke-width="0.8"/>
<rect x="2472" y="828" width="6" height="11" fill="#5a5654"/>
<rect x="2364" y="206" width="106" height="25" fill="#fafafa" stroke="#e0e0e0"/>
<line x1="2417" y1="208" x2="2417" y2="229" stroke="#ddd"/>
<circle cx="2377" cy="220" r="5" fill="none" stroke="#666"/><path d="M2379 222l5-9 5 9z" fill="none" stroke="#666"/><rect x="2393" y="214" width="8" height="8" fill="none" stroke="#666"/>
<rect x="2427" y="212" width="9" height="5" fill="none" stroke="#2d8ee0"/><rect x="2445" y="213" width="12" height="8" fill="none" stroke="#2d8ee0"/><rect x="2432" y="222" width="9" height="3" fill="none" stroke="#2d8ee0"/><path d="M2436 215l9 2M2441 223l4-3" stroke="#2d8ee0"/>
<rect x="2445" y="241" width="25" height="71" fill="#fafafa" stroke="#e0e0e0"/>
<path d="M2452 252v-4h4M2463 248h4v4M2467 258v4h-4M2456 262h-4v-4" stroke="#555" fill="none" stroke-width="1.3"/>
<path d="M2457 271v10M2452 276h10" stroke="#555" stroke-width="1.5"/><path d="M2452 299h10" stroke="#555" stroke-width="1.5"/>
<rect x="2445" y="320" width="25" height="25" fill="#fafafa" stroke="#e0e0e0"/>
<path d="M2457 325v15M2450 332h15M2454 328l3-3 3 3M2454 337l3 3 3-3M2453 329l-3 3 3 3M2461 329l3 3-3 3" stroke="#555" fill="none" stroke-width="1.3"/>
</svg>
<div class="a" style="left:1378px;top:1048px;width:1098px;height:2px;background:#a0a0a0"></div>
<div class="a" style="left:1175px;top:1050px;width:1301px;height:47px;background:linear-gradient(#202020,#111)"></div>
<div class="a" style="left:2462px;top:1083px"><svg width="12" height="12"><g fill="#fff"><rect x="9" y="0" width="2" height="2"/><rect x="6" y="3" width="2" height="2"/><rect x="9" y="3" width="2" height="2"/><rect x="3" y="6" width="2" height="2"/><rect x="6" y="6" width="2" height="2"/><rect x="9" y="6" width="2" height="2"/><rect x="0" y="9" width="2" height="2"/><rect x="3" y="9" width="2" height="2"/><rect x="6" y="9" width="2" height="2"/><rect x="9" y="9" width="2" height="2"/></g></svg></div>
<div class="a" style="left:236px;top:622px;width:1934px;height:530px;background:#f0f0f0;border:1px solid #1e7145;box-shadow:0 0 10px rgba(0,0,0,.3)"></div>
<div class="a" style="left:252px;top:638px"><svg width="19" height="18"><rect x="5" y="1" width="13" height="16" rx="1" fill="#21a366"/><rect x="5" y="6" width="13" height="6" fill="#107c41"/><rect x="5" y="12" width="13" height="5" fill="#185c37"/><rect x="1" y="4" width="10" height="10" rx="1" fill="#107c41"/><path d="M3.5 6.5l5 5M8.5 6.5l-5 5" stroke="#fff" stroke-width="1.5"/></svg></div>
<div class="a" style="left:285px;top:639px"><svg width="17" height="17"><path d="M1 1h12l3 3v12H1Z" fill="#c86ec8" stroke="#a83aa8"/><rect x="4" y="2" width="8" height="5" fill="#f3d0f3"/><rect x="4" y="10" width="9" height="6" fill="#f3d0f3"/></svg></div>
<div class="a" style="left:313px;top:639px"><svg width="70" height="16"><path d="M3 2v6h6" stroke="#888" fill="none" stroke-width="1.2"/><path d="M3 8c3-6 13-5 13 2 0 3-3 5-5 6" stroke="#888" fill="none" stroke-width="1.2"/><path d="M23 8l2 2 2-2" stroke="#aaa" fill="none"/><path d="M51 2v6h-6" stroke="#aaa" fill="none" stroke-width="1.2"/><path d="M51 8c-3-6-13-5-13 2 0 3 3 5 5 6" stroke="#aaa" fill="none" stroke-width="1.2"/><path d="M60 8l2 2 2-2" stroke="#aaa" fill="none"/></svg></div>
<div class="a" style="left:394px;top:642px"><svg width="10" height="10"><path d="M1 1h8" stroke="#444" stroke-width="1.2"/><path d="M2 4l3 3 3-3" stroke="#444" fill="none" stroke-width="1.2"/></svg></div>
<div class="a" style="left:420px;top:640px;font-size:12.3px;line-height:15px;color:#222;transform:scaleX(0.906);transform-origin:0 0;">B2_Kolizje&nbsp; - &nbsp;Excel</div>
<div class="a" style="left:978px;top:632px;width:467px;height:30px;background:#f7f7f7;border:1px solid #dcdcdc;border-radius:4px;box-shadow:0 1px 1px rgba(0,0,0,.08)"></div>
<div class="a" style="left:998px;top:640px"><svg width="16" height="16"><circle cx="10" cy="6" r="4.5" stroke="#555" fill="none" stroke-width="1.2"/><path d="M6.8 9.2L1.5 14.5" stroke="#555" stroke-width="1.3"/></svg></div>
<div class="a" style="left:1026px;top:639px;font-size:12.5px;line-height:15px;color:#555;transform:scaleX(0.987);transform-origin:0 0;">Wyszukaj</div>
<div class="a" style="left:1876px;top:639px;font-size:12.2px;line-height:15px;color:#222;transform:scaleX(0.932);transform-origin:0 0;">Piotr Salwa</div>
<div class="a" style="left:1942px;top:635px;width:24px;height:24px;border-radius:50%;background:#a8720e;color:#f5e6c0;font-size:9.5px;line-height:24px;text-align:center">PS</div>
<div class="a" style="left:1993px;top:638px"><svg width="18" height="18"><path d="M3 15l2-6 6-6 4 4-6 6z" stroke="#444" fill="none" stroke-width="1.2"/><path d="M3 15l4-2" stroke="#444"/><path d="M14 1v2M16 3h-2" stroke="#444"/></svg></div>
<div class="a" style="left:2043px;top:647px;width:11px;height:1px;background:#333"></div>
<div class="a" style="left:2092px;top:641px;width:11px;height:11px;border:1px solid #333"></div>
<div class="a" style="left:2139px;top:641px"><svg width="12" height="12"><path d="M1 1L11 11M11 1L1 11" stroke="#333" stroke-width="1.1"/></svg></div>
<div class="a" style="left:259px;top:680px;font-size:12.6px;line-height:15px;color:#333;transform:scaleX(0.970);transform-origin:0 0;">Plik</div>
<div class="a" style="left:304px;top:680px;font-size:12.6px;line-height:15px;color:#111;transform:scaleX(1.081);transform-origin:0 0;">Narzędzia główne</div>
<div class="a" style="left:433px;top:680px;font-size:12.6px;line-height:15px;color:#333;transform:scaleX(1.009);transform-origin:0 0;">Wstawianie</div>
<div class="a" style="left:520px;top:680px;font-size:12.6px;line-height:15px;color:#333;transform:scaleX(0.987);transform-origin:0 0;">Rysowanie</div>
<div class="a" style="left:604px;top:680px;font-size:12.6px;line-height:15px;color:#333;transform:scaleX(1.050);transform-origin:0 0;">Układ strony</div>
<div class="a" style="left:701px;top:680px;font-size:12.6px;line-height:15px;color:#333;transform:scaleX(1.011);transform-origin:0 0;">Formuły</div>
<div class="a" style="left:769px;top:680px;font-size:12.6px;line-height:15px;color:#333;transform:scaleX(0.996);transform-origin:0 0;">Dane</div>
<div class="a" style="left:819px;top:680px;font-size:12.6px;line-height:15px;color:#333;transform:scaleX(0.971);transform-origin:0 0;">Recenzja</div>
<div class="a" style="left:891px;top:680px;font-size:12.6px;line-height:15px;color:#333;transform:scaleX(1.065);transform-origin:0 0;">Widok</div>
<div class="a" style="left:949px;top:680px;font-size:12.6px;line-height:15px;color:#333;transform:scaleX(1.030);transform-origin:0 0;">Pomoc</div>
<div class="a" style="left:304px;top:696px;width:109px;height:3px;background:#1e7145;border-radius:1px"></div>
<div class="a" style="left:2027px;top:674px;width:130px;height:25px;background:#1e7145;border-radius:4px"></div>
<div class="a" style="left:2035px;top:679px"><svg width="15" height="15"><path d="M2 6v8h11v-4" stroke="#fff" fill="none" stroke-width="1.2"/><path d="M5 10c1-4 4-6 8-6M10 1l3 3-3 3" stroke="#fff" fill="none" stroke-width="1.2"/></svg></div>
<div class="a" style="left:2051px;top:678px;font-size:12.8px;line-height:15px;color:#fff;transform:scaleX(1.026);transform-origin:0 0;">Udostępnianie</div>
<div class="a" style="left:2137px;top:676px;width:1px;height:21px;background:#3a8a5e"></div>
<div class="a" style="left:2142px;top:684px"><svg width="9" height="6"><path d="M1 1l3.5 3.5L8 1" stroke="#fff" fill="none" stroke-width="1.2"/></svg></div>
<div class="a" style="left:245px;top:702px;width:1915px;height:98px;background:#fff;border-radius:8px;box-shadow:0 1px 2px rgba(0,0,0,.18)"></div>
<div class="a" style="left:265px;top:709px"><svg width="32" height="32"><rect x="2" y="5" width="19" height="22" rx="1" fill="#fbe5c0" stroke="#e7a43a" stroke-width="1.3"/><rect x="7" y="2" width="9" height="5" rx="2" fill="#fff" stroke="#888"/><rect x="12" y="12" width="17" height="19" fill="#fff" stroke="#555" stroke-width="1.2"/></svg></div>
<div class="a" style="left:263px;top:744px;font-size:12.3px;line-height:15px;color:#222;transform:scaleX(0.971);transform-origin:0 0;">Wklej</div>
<div class="a" style="left:274px;top:766px"><svg width="9" height="6"><path d="M1 1.5L4.5 4.5L8 1.5" stroke="#444" fill="none" stroke-width="1.1"/></svg></div>
<div class="a" style="left:305px;top:709px"><svg width="14" height="16"><path d="M3 1l7 9M11 1L4 10" stroke="#555" stroke-width="1.1"/><circle cx="3.5" cy="12.5" r="2.3" fill="none" stroke="#2b7bd6" stroke-width="1.2"/><circle cx="10.5" cy="12.5" r="2.3" fill="none" stroke="#2b7bd6" stroke-width="1.2"/></svg></div>
<div class="a" style="left:325px;top:711px;font-size:12.3px;line-height:15px;color:#222;transform:scaleX(1.019);transform-origin:0 0;">Wytnij</div>
<div class="a" style="left:305px;top:735px"><svg width="16" height="16"><path d="M1 1h8v3M1 1v13h4" stroke="#444" fill="none" stroke-width="1.1"/><path d="M5 4h6l4 4v8H5Z" stroke="#444" fill="#fff" stroke-width="1.1"/><path d="M7 10h6M7 12.5h6" stroke="#444"/></svg></div>
<div class="a" style="left:325px;top:737px;font-size:12.3px;line-height:15px;color:#222;transform:scaleX(0.994);transform-origin:0 0;">Kopiuj</div>
<div class="a" style="left:369px;top:741px"><svg width="9" height="6"><path d="M1 1.5L4.5 4.5L8 1.5" stroke="#444" fill="none" stroke-width="1.1"/></svg></div>
<div class="a" style="left:305px;top:761px"><svg width="16" height="16"><path d="M2 10l5-4 4 4-4 5z" fill="#f0a868" stroke="#d2691e"/><path d="M8 6l5-5 2 2-5 5" stroke="#444" fill="none" stroke-width="1.2"/></svg></div>
<div class="a" style="left:325px;top:763px;font-size:12.3px;line-height:15px;color:#222;transform:scaleX(0.994);transform-origin:0 0;">Malarz formatów</div>
<div class="a" style="left:309px;top:783px;font-size:12.2px;line-height:15px;color:#333;transform:scaleX(0.923);transform-origin:0 0;">Schowek</div>
<div class="a" style="left:420px;top:787px"><svg width="9" height="9"><path d="M1 8V1h4M8 4v4H4M3 3l5 5" stroke="#555" fill="none" stroke-width="1"/></svg></div>
<div class="a" style="left:431px;top:708px;width:1px;height:88px;background:#dadada"></div>
<div class="a" style="left:440px;top:714px;width:122px;height:23px;border:1px solid #8a8a8a;border-radius:4px;background:#fff"></div>
<div class="a" style="left:443px;top:717px;font-size:12.3px;line-height:15px;color:#222;transform:scaleX(0.970);transform-origin:0 0;">Calibri</div>
<div class="a" style="left:550px;top:723px"><svg width="9" height="6"><path d="M1 1.5L4.5 4.5L8 1.5" stroke="#333" fill="none" stroke-width="1.1"/></svg></div>
<div class="a" style="left:565px;top:714px;width:42px;height:23px;border:1px solid #8a8a8a;border-radius:4px;background:#fff"></div>
<div class="a" style="left:568px;top:717px;font-size:12.3px;line-height:15px;color:#222;">11</div>
<div class="a" style="left:595px;top:723px"><svg width="9" height="6"><path d="M1 1.5L4.5 4.5L8 1.5" stroke="#333" fill="none" stroke-width="1.1"/></svg></div>
<div class="a" style="left:614px;top:713px;font-size:17px;line-height:20px;color:#333;">A</div><div class="a" style="left:625px;top:711px;font-size:10px;line-height:12px;color:#2b7bd6;">^</div>
<div class="a" style="left:641px;top:716px;font-size:13.5px;line-height:16px;color:#333;">A</div><div class="a" style="left:650px;top:712px;font-size:10px;line-height:12px;color:#2b7bd6;">ˇ</div>
<div class="a" style="left:447px;top:747px;font-size:13.5px;line-height:16px;color:#333;font-weight:bold">B</div>
<div class="a" style="left:475px;top:747px;font-size:13.5px;line-height:16px;color:#333;font-style:italic;font-family:Liberation Serif">I</div>
<div class="a" style="left:499px;top:747px;font-size:13px;line-height:16px;color:#333;text-decoration:underline">U</div>
<div class="a" style="left:517px;top:755px"><svg width="9" height="6"><path d="M1 1.5L4.5 4.5L8 1.5" stroke="#333" fill="none" stroke-width="1.1"/></svg></div>
<div class="a" style="left:533px;top:745px;width:1px;height:24px;background:#dadada"></div>
<div class="a" style="left:540px;top:749px"><svg width="16" height="16"><rect x="1" y="1" width="14" height="13" fill="none" stroke="#555" stroke-dasharray="1.5 1.5"/><path d="M1 8h14M8 1v13" stroke="#555" stroke-dasharray="1.5 1.5"/><path d="M1 15h14" stroke="#222" stroke-width="1.4"/></svg></div>
<div class="a" style="left:561px;top:755px"><svg width="9" height="6"><path d="M1 1.5L4.5 4.5L8 1.5" stroke="#333" fill="none" stroke-width="1.1"/></svg></div>
<div class="a" style="left:576px;top:745px;width:1px;height:24px;background:#dadada"></div>
<div class="a" style="left:584px;top:747px"><svg width="16" height="18"><path d="M3 8l5-5 5 5-5 5z" fill="none" stroke="#444" stroke-width="1.2"/><path d="M12 4c2 1 2 3 2 4" stroke="#2b7bd6" stroke-width="1.4" fill="none"/><rect x="1" y="13" width="15" height="4" fill="#ffef00"/></svg></div>
<div class="a" style="left:604px;top:755px"><svg width="9" height="6"><path d="M1 1.5L4.5 4.5L8 1.5" stroke="#333" fill="none" stroke-width="1.1"/></svg></div>
<div class="a" style="left:626px;top:745px;font-size:15px;line-height:18px;color:#333;">A</div>
<div class="a" style="left:624px;top:764px;width:16px;height:4px;background:#e00"></div>
<div class="a" style="left:645px;top:755px"><svg width="9" height="6"><path d="M1 1.5L4.5 4.5L8 1.5" stroke="#333" fill="none" stroke-width="1.1"/></svg></div>
<div class="a" style="left:519px;top:783px;font-size:12.2px;line-height:15px;color:#333;transform:scaleX(0.905);transform-origin:0 0;">Czcionka</div>
<div class="a" style="left:656px;top:787px"><svg width="9" height="9"><path d="M1 8V1h4M8 4v4H4M3 3l5 5" stroke="#555" fill="none" stroke-width="1"/></svg></div>
<div class="a" style="left:667px;top:708px;width:1px;height:88px;background:#dadada"></div>
<div class="a" style="left:681px;top:716px;width:14px;height:1.3px;background:#444"></div><div class="a" style="left:681px;top:720px;width:14px;height:1.3px;background:#444"></div>
<div class="a" style="left:703px;top:713px;width:23px;height:24px;background:#e6e6e6;border:1px solid #8a8a8a;border-radius:4px"></div>
<div class="a" style="left:707px;top:720px;width:14px;height:1.3px;background:#444"></div><div class="a" style="left:707px;top:724px;width:14px;height:1.3px;background:#444"></div><div class="a" style="left:707px;top:728px;width:14px;height:1.3px;background:#444"></div>
<div class="a" style="left:733px;top:724px;width:14px;height:1.3px;background:#444"></div><div class="a" style="left:733px;top:728px;width:14px;height:1.3px;background:#444"></div>
<div class="a" style="left:754px;top:712px;width:1px;height:26px;background:#dadada"></div>
<div class="a" style="left:760px;top:716px"><svg width="20" height="18"><text x="0" y="10" font-size="8" fill="#444" font-family="Liberation Sans" transform="rotate(-30 5 8)">ab</text><path d="M6 15L16 5M12 5h4v4" stroke="#2b7bd6" fill="none" stroke-width="1.2"/></svg></div>
<div class="a" style="left:780px;top:723px"><svg width="9" height="6"><path d="M1 1.5L4.5 4.5L8 1.5" stroke="#333" fill="none" stroke-width="1.1"/></svg></div>
<div class="a" style="left:681px;top:750px;width:14px;height:1.3px;background:#444"></div><div class="a" style="left:681px;top:754px;width:10px;height:1.3px;background:#444"></div><div class="a" style="left:681px;top:758px;width:14px;height:1.3px;background:#444"></div><div class="a" style="left:681px;top:762px;width:10px;height:1.3px;background:#444"></div>
<div class="a" style="left:707.0px;top:750px;width:14px;height:1.3px;background:#444"></div><div class="a" style="left:709.0px;top:754px;width:10px;height:1.3px;background:#444"></div><div class="a" style="left:707.0px;top:758px;width:14px;height:1.3px;background:#444"></div><div class="a" style="left:709.0px;top:762px;width:10px;height:1.3px;background:#444"></div>
<div class="a" style="left:733px;top:750px;width:14px;height:1.3px;background:#444"></div><div class="a" style="left:737px;top:754px;width:10px;height:1.3px;background:#444"></div><div class="a" style="left:733px;top:758px;width:14px;height:1.3px;background:#444"></div><div class="a" style="left:737px;top:762px;width:10px;height:1.3px;background:#444"></div>
<div class="a" style="left:754px;top:746px;width:1px;height:24px;background:#dadada"></div>
<div class="a" style="left:762px;top:750px;width:14px;height:1.3px;background:#444"></div><div class="a" style="left:766px;top:754px;width:10px;height:1.3px;background:#444"></div><div class="a" style="left:766px;top:758px;width:10px;height:1.3px;background:#444"></div><div class="a" style="left:762px;top:762px;width:14px;height:1.3px;background:#444"></div><div class="a" style="left:761px;top:752px"><svg width="8" height="7"><path d="M7 3.5H1M3.5 1L1 3.5 3.5 6" stroke="#2b7bd6" fill="none" stroke-width="1.1"/></svg></div>
<div class="a" style="left:788px;top:750px;width:14px;height:1.3px;background:#444"></div><div class="a" style="left:792px;top:754px;width:10px;height:1.3px;background:#444"></div><div class="a" style="left:792px;top:758px;width:10px;height:1.3px;background:#444"></div><div class="a" style="left:788px;top:762px;width:14px;height:1.3px;background:#444"></div><div class="a" style="left:787px;top:752px"><svg width="8" height="7"><path d="M1 3.5H7M4.5 1L7 3.5 4.5 6" stroke="#2b7bd6" fill="none" stroke-width="1.1"/></svg></div>
<div class="a" style="left:813px;top:712px;width:1px;height:58px;background:#dadada"></div>
<div class="a" style="left:820px;top:713px;width:98px;height:24px;background:#e6e6e6;border:1px solid #8a8a8a;border-radius:4px"></div>
<div class="a" style="left:825px;top:716px"><svg width="18" height="18"><text x="1" y="8" font-size="8" fill="#444" font-family="Liberation Sans">ab</text><text x="1" y="16" font-size="8" fill="#444" font-family="Liberation Sans">c</text><path d="M15 6c3 4 0 7-5 7M12 11l-2 2 2 2" stroke="#2b7bd6" fill="none" stroke-width="1.1"/></svg></div>
<div class="a" style="left:844px;top:717px;font-size:12.3px;line-height:15px;color:#222;transform:scaleX(0.956);transform-origin:0 0;">Zawijaj tekst</div>
<div class="a" style="left:820px;top:745px;width:132px;height:24px;background:#e6e6e6;border:1px solid #8a8a8a;border-radius:4px"></div>
<div class="a" style="left:824px;top:748px"><svg width="16" height="18"><rect x="1" y="2" width="14" height="13" fill="#fff" stroke="#444"/><path d="M1 6h14M1 11h14" stroke="#444"/><path d="M3 8.5h10M5 6.5l-2 2 2 2M11 6.5l2 2-2 2" stroke="#2b7bd6" fill="none"/></svg></div>
<div class="a" style="left:844px;top:749px;font-size:12.3px;line-height:15px;color:#222;transform:scaleX(0.953);transform-origin:0 0;">Scal i wyśrodkuj</div>
<div class="a" style="left:937px;top:755px"><svg width="9" height="6"><path d="M1 1.5L4.5 4.5L8 1.5" stroke="#333" fill="none" stroke-width="1.1"/></svg></div>
<div class="a" style="left:774px;top:783px;font-size:12.2px;line-height:15px;color:#333;transform:scaleX(0.965);transform-origin:0 0;">Wyrównanie</div>
<div class="a" style="left:949px;top:787px"><svg width="9" height="9"><path d="M1 8V1h4M8 4v4H4M3 3l5 5" stroke="#555" fill="none" stroke-width="1"/></svg></div>
<div class="a" style="left:961px;top:708px;width:1px;height:88px;background:#dadada"></div>
<div class="a" style="left:969px;top:713px;width:146px;height:24px;border:1px solid #8a8a8a;border-radius:4px;background:#fff"></div>
<div class="a" style="left:972px;top:717px;font-size:12.3px;line-height:15px;color:#222;transform:scaleX(0.993);transform-origin:0 0;">Ogólne</div>
<div class="a" style="left:1103px;top:723px"><svg width="9" height="6"><path d="M1 1.5L4.5 4.5L8 1.5" stroke="#333" fill="none" stroke-width="1.1"/></svg></div>
<div class="a" style="left:973px;top:750px"><svg width="18" height="16"><rect x="1" y="2" width="13" height="9" fill="#fff" stroke="#444"/><text x="2" y="10" font-size="7" fill="#444" font-family="Liberation Sans">cc</text><ellipse cx="12" cy="11" rx="4" ry="2" fill="#f4b183" stroke="#e07020"/><rect x="8" y="11" width="8" height="4" fill="#f4b183" stroke="#e07020"/></svg></div>
<div class="a" style="left:995px;top:755px"><svg width="9" height="6"><path d="M1 1.5L4.5 4.5L8 1.5" stroke="#333" fill="none" stroke-width="1.1"/></svg></div>
<div class="a" style="left:1013px;top:745px;font-size:17px;line-height:20px;color:#333;">%</div>
<div class="a" style="left:1040px;top:751px;font-size:9.5px;line-height:11px;color:#555;">000</div>
<div class="a" style="left:1062px;top:746px;width:1px;height:24px;background:#dadada"></div>
<div class="a" style="left:1075px;top:746px;font-size:8.5px;line-height:10px;color:#444;">0</div><div class="a" style="left:1072px;top:754px;font-size:8.5px;line-height:10px;color:#444;">,00</div><div class="a" style="left:1068px;top:748px"><svg width="10" height="8"><path d="M9 4H1M4 1L1 4l3 3" stroke="#2b7bd6" fill="none" stroke-width="1.1"/></svg></div>
<div class="a" style="left:1098px;top:746px;font-size:8.5px;line-height:10px;color:#444;">,00</div><div class="a" style="left:1103px;top:754px;font-size:8.5px;line-height:10px;color:#444;">0</div><div class="a" style="left:1094px;top:756px"><svg width="10" height="8"><path d="M1 4h8M6 1l3 3-3 3" stroke="#2b7bd6" fill="none" stroke-width="1.1"/></svg></div>
<div class="a" style="left:1018px;top:783px;font-size:12.2px;line-height:15px;color:#333;transform:scaleX(0.868);transform-origin:0 0;">Liczba</div>
<div class="a" style="left:1112px;top:787px"><svg width="9" height="9"><path d="M1 8V1h4M8 4v4H4M3 3l5 5" stroke="#555" fill="none" stroke-width="1"/></svg></div>
<div class="a" style="left:1122px;top:708px;width:1px;height:88px;background:#dadada"></div>
<div class="a" style="left:1157px;top:712px"><svg width="30" height="26"><rect x="1" y="1" width="27" height="23" fill="#fff" stroke="#666"/><path d="M1 7h27M1 13h27M1 19h27M10 1v23M19 1v23" stroke="#888"/><rect x="2" y="8" width="16" height="5" fill="#e8505b"/><rect x="11" y="14" width="16" height="5" fill="#e8505b"/><rect x="2" y="20" width="8" height="4" fill="#e8505b"/><rect x="11" y="2" width="7" height="5" fill="#e8505b"/></svg></div>
<div class="a" style="left:1133px;top:742px;font-size:12.3px;line-height:15px;color:#222;transform:scaleX(0.973);transform-origin:0 0;">Formatowanie</div>
<div class="a" style="left:1135px;top:758px;font-size:12.3px;line-height:15px;color:#222;transform:scaleX(0.985);transform-origin:0 0;">warunkowe</div><div class="a" style="left:1203px;top:762px"><svg width="9" height="6"><path d="M1 1.5L4.5 4.5L8 1.5" stroke="#333" fill="none" stroke-width="1.1"/></svg></div>
<div class="a" style="left:1238px;top:712px"><svg width="32" height="28"><rect x="1" y="1" width="25" height="22" fill="#fff" stroke="#666"/><path d="M1 6h25M1 12h25M1 18h25M9 1v22M17 1v22" stroke="#888"/><rect x="2" y="2" width="23" height="4" fill="#9dc3e6"/><path d="M14 24l12-14 3 2-12 14z" fill="#2b7bd6"/></svg></div>
<div class="a" style="left:1216px;top:742px;font-size:12.3px;line-height:15px;color:#222;transform:scaleX(0.978);transform-origin:0 0;">Formatuj jako</div>
<div class="a" style="left:1231px;top:758px;font-size:12.3px;line-height:15px;color:#222;transform:scaleX(0.952);transform-origin:0 0;">tabelę</div><div class="a" style="left:1269px;top:762px"><svg width="9" height="6"><path d="M1 1.5L4.5 4.5L8 1.5" stroke="#333" fill="none" stroke-width="1.1"/></svg></div>
<div class="a" style="left:1296px;top:712px;width:335px;height:64px;border:1px solid #d4d4d4;border-radius:4px;background:#fff"></div>
<div class="a" style="left:1298px;top:715px;width:104px;height:28px;background:#fff;border:2px solid #555"></div>
<div class="a" style="left:1304px;top:720px;font-size:13.2px;line-height:16px;color:#222;transform:scaleX(1.062);transform-origin:0 0;">Normalny</div>
<div class="a" style="left:1406px;top:716px;width:99px;height:25px;background:#c6efce;"></div>
<div class="a" style="left:1412px;top:721px;font-size:13.2px;line-height:16px;color:#006100;transform:scaleX(1.059);transform-origin:0 0;">Dobry</div>
<div class="a" style="left:1512px;top:716px;width:99px;height:25px;background:#ffeb9c;"></div>
<div class="a" style="left:1518px;top:721px;font-size:13.2px;line-height:16px;color:#9c5700;transform:scaleX(1.085);transform-origin:0 0;">Neutralny</div>
<div class="a" style="left:1300px;top:744px;width:100px;height:25px;background:#ffc7ce;"></div>
<div class="a" style="left:1306px;top:749px;font-size:13.2px;line-height:16px;color:#9c0006;transform:scaleX(0.989);transform-origin:0 0;">Zły</div>
<div class="a" style="left:1406px;top:744px;width:99px;height:26px;background:#ffcc99;border:1px solid #7f7f7f"></div>
<div class="a" style="left:1412px;top:749px;font-size:13.2px;line-height:16px;color:#3f3f76;transform:scaleX(1.043);transform-origin:0 0;">Dane wejści...</div>
<div class="a" style="left:1512px;top:744px;width:99px;height:26px;background:#f2f2f2;border:1px solid #3f3f3f"></div>
<div class="a" style="left:1518px;top:749px;font-size:13.2px;line-height:16px;color:#3f3f3f;font-weight:bold;transform:scaleX(0.970);transform-origin:0 0;font-weight:bold">Dane wyjści...</div>
<div class="a" style="left:1615px;top:713px;width:15px;height:62px;border-left:1px solid #e0e0e0"></div>
<div class="a" style="left:1619px;top:719px"><svg width="9" height="6"><path d="M1 5l3.5-3.5L8 5" stroke="#999" fill="none"/></svg></div>
<div class="a" style="left:1616px;top:733px;width:14px;height:1px;background:#e0e0e0"></div>
<div class="a" style="left:1619px;top:740px"><svg width="9" height="6"><path d="M1 1l3.5 3.5L8 1" stroke="#444" fill="none" stroke-width="1.1"/></svg></div>
<div class="a" style="left:1616px;top:752px;width:14px;height:1px;background:#e0e0e0"></div>
<div class="a" style="left:1619px;top:758px"><svg width="9" height="9"><path d="M1 1h7M1 4l3.5 3.5L8 4" stroke="#444" fill="none" stroke-width="1.1"/></svg></div>
<div class="a" style="left:1369px;top:783px;font-size:12.2px;line-height:15px;color:#333;transform:scaleX(0.855);transform-origin:0 0;">Style</div>
<div class="a" style="left:1641px;top:708px;width:1px;height:88px;background:#dadada"></div>
<div class="a" style="left:1655px;top:712px"><svg width="34" height="26"><rect x="3" y="5" width="29" height="15" fill="#fff" stroke="#666"/><rect x="8" y="9" width="23" height="7" fill="#5b9bd5"/><path d="M12 5v15M22 5v15" stroke="#888"/><path d="M10 12.5H1M4 9.5L1 12.5 4 15.5" stroke="#2b7bd6" stroke-width="1.3" fill="none"/></svg></div>
<div class="a" style="left:1653px;top:742px;font-size:12.3px;line-height:15px;color:#222;transform:scaleX(0.932);transform-origin:0 0;">Wstaw</div><div class="a" style="left:1666px;top:763px"><svg width="9" height="6"><path d="M1 1.5L4.5 4.5L8 1.5" stroke="#333" fill="none" stroke-width="1.1"/></svg></div>
<div class="a" style="left:1700px;top:712px"><svg width="34" height="26"><rect x="1" y="5" width="27" height="15" fill="#fff" stroke="#666"/><rect x="2" y="9" width="20" height="7" fill="#5b9bd5"/><path d="M10 5v15M19 5v15" stroke="#888"/><path d="M22 7l9 11M31 7l-9 11" stroke="#e0303a" stroke-width="1.3"/></svg></div>
<div class="a" style="left:1701px;top:742px;font-size:12.3px;line-height:15px;color:#222;transform:scaleX(0.923);transform-origin:0 0;">Usuń</div><div class="a" style="left:1710px;top:763px"><svg width="9" height="6"><path d="M1 1.5L4.5 4.5L8 1.5" stroke="#333" fill="none" stroke-width="1.1"/></svg></div>
<div class="a" style="left:1748px;top:708px"><svg width="32" height="30"><path d="M5 3h22M16 1v4" stroke="#2b7bd6"/><rect x="3" y="7" width="26" height="20" fill="#fff" stroke="#666"/><rect x="4" y="14" width="24" height="6" fill="#5b9bd5"/><path d="M3 14h26M3 20h26M12 7v20M20 7v20" stroke="#888"/></svg></div>
<div class="a" style="left:1740px;top:742px;font-size:12.3px;line-height:15px;color:#222;transform:scaleX(0.989);transform-origin:0 0;">Formatuj</div><div class="a" style="left:1760px;top:763px"><svg width="9" height="6"><path d="M1 1.5L4.5 4.5L8 1.5" stroke="#333" fill="none" stroke-width="1.1"/></svg></div>
<div class="a" style="left:1699px;top:783px;font-size:12.2px;line-height:15px;color:#333;transform:scaleX(0.943);transform-origin:0 0;">Komórki</div>
<div class="a" style="left:1798px;top:708px;width:1px;height:88px;background:#dadada"></div>
<div class="a" style="left:1811px;top:707px;font-size:15px;line-height:18px;color:#333;">Σ</div>
<div class="a" style="left:1831px;top:710px;font-size:12.3px;line-height:15px;color:#222;transform:scaleX(0.988);transform-origin:0 0;">Autosumowanie</div><div class="a" style="left:1933px;top:714px"><svg width="9" height="6"><path d="M1 1.5L4.5 4.5L8 1.5" stroke="#333" fill="none" stroke-width="1.1"/></svg></div>
<div class="a" style="left:1810px;top:736px"><svg width="16" height="15"><rect x="1" y="1" width="14" height="13" fill="#fff" stroke="#555"/><path d="M8 3v8M5 8l3 3 3-3" stroke="#2b7bd6" fill="none" stroke-width="1.2"/></svg></div>
<div class="a" style="left:1831px;top:736px;font-size:12.3px;line-height:15px;color:#222;transform:scaleX(0.964);transform-origin:0 0;">Wypełnij</div><div class="a" style="left:1883px;top:740px"><svg width="9" height="6"><path d="M1 1.5L4.5 4.5L8 1.5" stroke="#333" fill="none" stroke-width="1.1"/></svg></div>
<div class="a" style="left:1810px;top:761px"><svg width="16" height="15"><path d="M2 9l6-7 6 6-6 6z" fill="#d88ee0" stroke="#a040b0"/><path d="M5 6l6 6" stroke="#fff"/></svg></div>
<div class="a" style="left:1831px;top:762px;font-size:12.3px;line-height:15px;color:#222;transform:scaleX(0.888);transform-origin:0 0;">Wyczyść</div><div class="a" style="left:1883px;top:766px"><svg width="9" height="6"><path d="M1 1.5L4.5 4.5L8 1.5" stroke="#333" fill="none" stroke-width="1.1"/></svg></div>
<div class="a" style="left:1952px;top:708px"><svg width="34" height="30"><text x="1" y="12" font-size="12" fill="#2b7bd6" font-family="Liberation Sans">A</text><text x="1" y="27" font-size="12" fill="#444" font-family="Liberation Sans">Z</text><path d="M14 12h18l-7 8v8l-4-2v-6z" fill="none" stroke="#444" stroke-width="1.2"/></svg></div>
<div class="a" style="left:1948px;top:742px;font-size:12.3px;line-height:15px;color:#222;transform:scaleX(0.993);transform-origin:0 0;">Sortuj i</div>
<div class="a" style="left:1946px;top:758px;font-size:12.3px;line-height:15px;color:#222;transform:scaleX(1.078);transform-origin:0 0;">filtruj</div><div class="a" style="left:1981px;top:762px"><svg width="9" height="6"><path d="M1 1.5L4.5 4.5L8 1.5" stroke="#333" fill="none" stroke-width="1.1"/></svg></div>
<div class="a" style="left:2000px;top:708px"><svg width="30" height="30"><circle cx="19" cy="11" r="9" fill="none" stroke="#444" stroke-width="1.3"/><path d="M12 18L2 28" stroke="#444" stroke-width="1.5"/></svg></div>
<div class="a" style="left:1996px;top:742px;font-size:12.3px;line-height:15px;color:#222;transform:scaleX(0.943);transform-origin:0 0;">Znajdź i</div>
<div class="a" style="left:1993px;top:758px;font-size:12.3px;line-height:15px;color:#222;transform:scaleX(0.891);transform-origin:0 0;">zaznacz</div><div class="a" style="left:2039px;top:762px"><svg width="9" height="6"><path d="M1 1.5L4.5 4.5L8 1.5" stroke="#333" fill="none" stroke-width="1.1"/></svg></div>
<div class="a" style="left:1898px;top:783px;font-size:12.2px;line-height:15px;color:#333;transform:scaleX(0.939);transform-origin:0 0;">Edytowanie</div>
<div class="a" style="left:2054px;top:708px;width:1px;height:88px;background:#dadada"></div>
<div class="a" style="left:2140px;top:784px"><svg width="12" height="8"><path d="M1 1l5 5 5-5" stroke="#444" fill="none" stroke-width="1.3"/></svg></div>
<div class="a" style="left:246px;top:809px;width:100px;height:26px;background:#fff;border-radius:4px;box-shadow:0 0 1px rgba(0,0,0,.35)"></div>
<div class="a" style="left:252px;top:814px;font-size:12.8px;line-height:15px;color:#222;transform:scaleX(0.917);transform-origin:0 0;">C2</div>
<div class="a" style="left:329px;top:819px"><svg width="12" height="8"><path d="M1 1l5 5 5-5" stroke="#333" fill="none" stroke-width="1.3"/></svg></div>
<div class="a" style="left:356px;top:815px;width:2px;height:2px;background:#444;box-shadow:0 4px 0 #444,0 8px 0 #444"></div>
<div class="a" style="left:368px;top:809px;width:73px;height:26px;background:#fff;border-radius:4px;box-shadow:0 0 1px rgba(0,0,0,.35)"></div>
<div class="a" style="left:371px;top:815px"><svg width="66" height="16"><path d="M2 2l11 11M13 2L2 13" stroke="#aaa" stroke-width="1.2"/><path d="M25 8l4 5 8-10" stroke="#aaa" fill="none" stroke-width="1.2"/><text x="51" y="13" font-size="14" font-style="italic" fill="#777" font-family="Liberation Serif">fx</text></svg></div>
<div class="a" style="left:446px;top:809px;width:1714px;height:26px;background:#fff;border-radius:4px;box-shadow:0 0 1px rgba(0,0,0,.35)"></div>
<div class="a" style="left:457px;top:814px;font-size:12.8px;line-height:15px;color:#222;transform:scaleX(0.996);transform-origin:0 0;">Clash6</div>
<div class="a" style="left:2144px;top:818px"><svg width="14" height="9"><path d="M1 1l6 6 6-6" stroke="#333" fill="none" stroke-width="1.3"/></svg></div>
<div class="a" style="left:237px;top:842px;width:1932px;height:255px;background:#fff"></div>
<div class="a" style="left:237px;top:843px;width:1908px;height:18px;background:#f5f5f5;border-bottom:1px solid #c8c8c8"></div>
<div class="a" style="left:247px;top:848px"><svg width="12" height="12"><path d="M11 1V11H1Z" fill="#dcdcdc"/></svg></div>
<div class="a" style="left:326px;top:846px;width:1px;height:15px;background:#d8d8d8"></div>
<div class="a" style="left:262px;top:844px;width:64px;text-align:center;font-size:13px;line-height:15px;color:#444">A</div>
<div class="a" style="left:390px;top:846px;width:1px;height:15px;background:#d8d8d8"></div>
<div class="a" style="left:326px;top:844px;width:64px;text-align:center;font-size:13px;line-height:15px;color:#444">B</div>
<div class="a" style="left:390px;top:843px;width:68px;height:18px;background:#d6d6d6;border-bottom:2px solid #1e7145"></div>
<div class="a" style="left:458px;top:846px;width:1px;height:15px;background:#d8d8d8"></div>
<div class="a" style="left:390px;top:844px;width:68px;text-align:center;font-size:13px;line-height:15px;color:#1e5c3a">C</div>
<div class="a" style="left:458px;top:843px;width:54px;height:18px;background:#d6d6d6;border-bottom:2px solid #1e7145"></div>
<div class="a" style="left:512px;top:846px;width:1px;height:15px;background:#d8d8d8"></div>
<div class="a" style="left:458px;top:844px;width:54px;text-align:center;font-size:13px;line-height:15px;color:#1e5c3a">D</div>
<div class="a" style="left:558px;top:846px;width:1px;height:15px;background:#d8d8d8"></div>
<div class="a" style="left:512px;top:844px;width:46px;text-align:center;font-size:13px;line-height:15px;color:#444">E</div>
<div class="a" style="left:618px;top:846px;width:1px;height:15px;background:#d8d8d8"></div>
<div class="a" style="left:558px;top:844px;width:60px;text-align:center;font-size:13px;line-height:15px;color:#444">F</div>
<div class="a" style="left:739px;top:846px;width:1px;height:15px;background:#d8d8d8"></div>
<div class="a" style="left:618px;top:844px;width:121px;text-align:center;font-size:13px;line-height:15px;color:#444">G</div>
<div class="a" style="left:817px;top:846px;width:1px;height:15px;background:#d8d8d8"></div>
<div class="a" style="left:739px;top:844px;width:78px;text-align:center;font-size:13px;line-height:15px;color:#444">H</div>
<div class="a" style="left:924px;top:846px;width:1px;height:15px;background:#d8d8d8"></div>
<div class="a" style="left:817px;top:844px;width:107px;text-align:center;font-size:13px;line-height:15px;color:#444">I</div>
<div class="a" style="left:970px;top:846px;width:1px;height:15px;background:#d8d8d8"></div>
<div class="a" style="left:924px;top:844px;width:46px;text-align:center;font-size:13px;line-height:15px;color:#444">J</div>
<div class="a" style="left:1025px;top:846px;width:1px;height:15px;background:#d8d8d8"></div>
<div class="a" style="left:970px;top:844px;width:55px;text-align:center;font-size:13px;line-height:15px;color:#444">K</div>
<div class="a" style="left:1105px;top:846px;width:1px;height:15px;background:#d8d8d8"></div>
<div class="a" style="left:1025px;top:844px;width:80px;text-align:center;font-size:13px;line-height:15px;color:#444">L</div>
<div class="a" style="left:1239px;top:846px;width:1px;height:15px;background:#d8d8d8"></div>
<div class="a" style="left:1105px;top:844px;width:134px;text-align:center;font-size:13px;line-height:15px;color:#444">M</div>
<div class="a" style="left:1344px;top:846px;width:1px;height:15px;background:#d8d8d8"></div>
<div class="a" style="left:1239px;top:844px;width:105px;text-align:center;font-size:13px;line-height:15px;color:#444">N</div>
<div class="a" style="left:1420px;top:846px;width:1px;height:15px;background:#d8d8d8"></div>
<div class="a" style="left:1344px;top:844px;width:76px;text-align:center;font-size:13px;line-height:15px;color:#444">O</div>
<div class="a" style="left:1489px;top:846px;width:1px;height:15px;background:#d8d8d8"></div>
<div class="a" style="left:1420px;top:844px;width:69px;text-align:center;font-size:13px;line-height:15px;color:#444">P</div>
<div class="a" style="left:1623px;top:846px;width:1px;height:15px;background:#d8d8d8"></div>
<div class="a" style="left:1489px;top:844px;width:134px;text-align:center;font-size:13px;line-height:15px;color:#444">Q</div>
<div class="a" style="left:1712px;top:846px;width:1px;height:15px;background:#d8d8d8"></div>
<div class="a" style="left:1623px;top:844px;width:89px;text-align:center;font-size:13px;line-height:15px;color:#444">R</div>
<div class="a" style="left:1866px;top:846px;width:1px;height:15px;background:#d8d8d8"></div>
<div class="a" style="left:1712px;top:844px;width:154px;text-align:center;font-size:13px;line-height:15px;color:#444">S</div>
<div class="a" style="left:1935px;top:846px;width:1px;height:15px;background:#d8d8d8"></div>
<div class="a" style="left:1866px;top:844px;width:69px;text-align:center;font-size:13px;line-height:15px;color:#444">T</div>
<div class="a" style="left:2000px;top:846px;width:1px;height:15px;background:#d8d8d8"></div>
<div class="a" style="left:1935px;top:844px;width:65px;text-align:center;font-size:13px;line-height:15px;color:#444">U</div>
<div class="a" style="left:2064px;top:846px;width:1px;height:15px;background:#d8d8d8"></div>
<div class="a" style="left:2000px;top:844px;width:64px;text-align:center;font-size:13px;line-height:15px;color:#444">V</div>
<div class="a" style="left:2129px;top:846px;width:1px;height:15px;background:#d8d8d8"></div>
<div class="a" style="left:2064px;top:844px;width:65px;text-align:center;font-size:13px;line-height:15px;color:#444">W</div>
<div class="a" style="left:237px;top:861px;width:25px;height:21px;background:#f5f5f5;border-bottom:1px solid #d0d0d0"></div>
<div class="a" style="left:237px;top:865px;width:25px;text-align:center;font-size:13px;line-height:15px;color:#444">1</div>
<div class="a" style="left:237px;top:882px;width:25px;height:100px;background:#d6d6d6;border-bottom:1px solid #d0d0d0"></div>
<div class="a" style="left:237px;top:965px;width:25px;text-align:center;font-size:13px;line-height:15px;color:#1e5c3a">2</div>
<div class="a" style="left:237px;top:982px;width:25px;height:100px;background:#f5f5f5;border-bottom:1px solid #d0d0d0"></div>
<div class="a" style="left:237px;top:1065px;width:25px;text-align:center;font-size:13px;line-height:15px;color:#444">3</div>
<div class="a" style="left:237px;top:1082px;width:25px;height:15px;background:#f5f5f5;border-bottom:1px solid #d0d0d0"></div>
<div class="a" style="left:260px;top:882px;width:2px;height:100px;background:#1e7145"></div>
<div class="a" style="left:262px;top:861px;width:843px;height:21px;background:#eeeeee"></div>
<div class="a" style="left:1105px;top:861px;width:384px;height:21px;background:#9cc8f2"></div>
<div class="a" style="left:1489px;top:861px;width:446px;height:21px;background:#fcc6c6"></div>
<div class="a" style="left:1105px;top:882px;width:384px;height:215px;background:#dcebfa"></div>
<div class="a" style="left:1489px;top:882px;width:446px;height:215px;background:#fde8e8"></div>
<div class="a" style="left:261px;top:861px;width:2px;height:236px;background:#9a9a9a"></div>
<div class="a" style="left:389px;top:861px;width:2px;height:236px;background:#9a9a9a"></div>
<div class="a" style="left:511px;top:861px;width:2px;height:236px;background:#9a9a9a"></div>
<div class="a" style="left:557px;top:861px;width:2px;height:236px;background:#9a9a9a"></div>
<div class="a" style="left:617px;top:861px;width:2px;height:236px;background:#9a9a9a"></div>
<div class="a" style="left:738px;top:861px;width:2px;height:236px;background:#9a9a9a"></div>
<div class="a" style="left:816px;top:861px;width:2px;height:236px;background:#9a9a9a"></div>
<div class="a" style="left:923px;top:861px;width:2px;height:236px;background:#9a9a9a"></div>
<div class="a" style="left:1104px;top:861px;width:2px;height:236px;background:#9a9a9a"></div>
<div class="a" style="left:1238px;top:861px;width:2px;height:236px;background:#9a9a9a"></div>
<div class="a" style="left:1343px;top:861px;width:2px;height:236px;background:#9a9a9a"></div>
<div class="a" style="left:1419px;top:861px;width:2px;height:236px;background:#9a9a9a"></div>
<div class="a" style="left:1488px;top:861px;width:2px;height:236px;background:#9a9a9a"></div>
<div class="a" style="left:1622px;top:861px;width:2px;height:236px;background:#9a9a9a"></div>
<div class="a" style="left:1711px;top:861px;width:2px;height:236px;background:#9a9a9a"></div>
<div class="a" style="left:1865px;top:861px;width:2px;height:236px;background:#9a9a9a"></div>
<div class="a" style="left:1934px;top:861px;width:2px;height:236px;background:#9a9a9a"></div>
<div class="a" style="left:262px;top:860px;width:1673px;height:2px;background:#9a9a9a"></div>
<div class="a" style="left:262px;top:881px;width:1673px;height:2px;background:#9a9a9a"></div>
<div class="a" style="left:262px;top:981px;width:1673px;height:2px;background:#9a9a9a"></div>
<div class="a" style="left:262px;top:1081px;width:1673px;height:2px;background:#9a9a9a"></div>
<div class="a" style="left:264px;top:864px;font-size:13.2px;line-height:16px;color:#111;font-weight:bold;letter-spacing:-0.2px">Image</div>
<div class="a" style="left:392px;top:864px;font-size:13.2px;line-height:16px;color:#111;font-weight:bold;letter-spacing:-0.2px">Clash Name</div>
<div class="a" style="left:514px;top:864px;font-size:13.2px;line-height:16px;color:#111;font-weight:bold;letter-spacing:-0.2px">Status</div>
<div class="a" style="left:560px;top:864px;font-size:13.2px;line-height:16px;color:#111;font-weight:bold;letter-spacing:-0.2px">Distance</div>
<div class="a" style="left:620px;top:864px;font-size:13.2px;line-height:16px;color:#111;font-weight:bold;letter-spacing:-0.2px">Grid Location</div>
<div class="a" style="left:741px;top:864px;font-size:13.2px;line-height:16px;color:#111;font-weight:bold;letter-spacing:-0.2px">Description</div>
<div class="a" style="left:819px;top:864px;font-size:13.2px;line-height:16px;color:#111;font-weight:bold;letter-spacing:-0.2px">Date Found</div>
<div class="a" style="left:1107px;top:864px;font-size:13.2px;line-height:16px;color:#111;font-weight:bold;letter-spacing:-0.2px">Item ID</div>
<div class="a" style="left:1241px;top:864px;font-size:13.2px;line-height:16px;color:#111;font-weight:bold;letter-spacing:-0.2px">Layer</div>
<div class="a" style="left:1346px;top:864px;font-size:13.2px;line-height:16px;color:#111;font-weight:bold;letter-spacing:-0.2px">Item Name</div>
<div class="a" style="left:1422px;top:864px;font-size:13.2px;line-height:16px;color:#111;font-weight:bold;letter-spacing:-0.2px">Item Type</div>
<div class="a" style="left:1491px;top:864px;font-size:13.2px;line-height:16px;color:#111;font-weight:bold;letter-spacing:-0.2px">Item ID</div>
<div class="a" style="left:1625px;top:864px;font-size:13.2px;line-height:16px;color:#111;font-weight:bold;letter-spacing:-0.2px">Layer</div>
<div class="a" style="left:1714px;top:864px;font-size:13.2px;line-height:16px;color:#111;font-weight:bold;letter-spacing:-0.2px">Item Name</div>
<div class="a" style="left:1868px;top:864px;font-size:13.2px;line-height:16px;color:#111;font-weight:bold;letter-spacing:-0.2px">Item Type</div>
<div class="a" style="left:926px;top:862px;width:60px;height:8px;overflow:hidden"><div style="position:absolute;top:-7px;left:2px;font-size:13.2px;font-weight:bold;color:#111">ClashP</div></div>
<div class="a" style="left:944px;top:878px;width:2px;height:2px;background:#111;box-shadow:10px 0 0 #111"></div>
<div class="a" style="left:393px;top:925px;font-size:13.2px;line-height:16px;color:#222;transform:scaleX(0.966);transform-origin:0 0;">Clash6</div>
<div class="a" style="left:515px;top:926px;font-size:13.2px;line-height:16px;color:#222;">Active</div>
<div class="a" style="left:561px;top:926px;font-size:13.2px;line-height:16px;color:#222;">-0.352</div>
<div class="a" style="left:621px;top:926px;font-size:13.2px;line-height:16px;color:#222;">D-8 : K_Poziom 0</div>
<div class="a" style="left:742px;top:926px;font-size:13.2px;line-height:16px;color:#222;">Hard</div>
<div class="a" style="left:820px;top:926px;font-size:13.2px;line-height:16px;color:#222;">2023/9/20&nbsp; 12:13</div>
<div class="a" style="left:927px;top:926px;font-size:13.2px;line-height:16px;color:#222;">57.204</div>
<div class="a" style="left:973px;top:926px;font-size:13.2px;line-height:16px;color:#222;">-60.977</div>
<div class="a" style="left:1028px;top:926px;font-size:13.2px;line-height:16px;color:#222;">57.952</div>
<div class="a" style="left:1108px;top:926px;font-size:13.2px;line-height:16px;color:#222;"><i>Element ID</i> : 5163760</div>
<div class="a" style="left:1242px;top:926px;font-size:13.2px;line-height:16px;color:#222;">K_Poziom +2</div>
<div class="a" style="left:1347px;top:926px;font-size:13.2px;line-height:16px;color:#222;">Żelbet</div>
<div class="a" style="left:1423px;top:926px;font-size:13.2px;line-height:16px;color:#222;">Solid</div>
<div class="a" style="left:1492px;top:926px;font-size:13.2px;line-height:16px;color:#222;"><i>Element ID</i> : 887918</div>
<div class="a" style="left:1626px;top:926px;font-size:13.2px;line-height:16px;color:#222;">Poziom 0</div>
<div class="a" style="left:1715px;top:926px;font-size:13.2px;line-height:16px;color:#222;letter-spacing:-0.15px">Cable Tray with Fittings</div>
<div class="a" style="left:1869px;top:926px;font-size:13.2px;line-height:16px;color:#222;">Line</div>
<div class="a" style="left:263px;top:882px;width:94px;height:95px;overflow:hidden">
<svg width="94" height="95"><rect width="94" height="95" fill="#2b2b2b"/>
<g stroke="#474747" stroke-width="1.6" fill="none"><path d="M0 40L40 20L94 5M0 60L50 35L94 25M0 80L45 55M0 95L40 75M5 0L40 40L94 90M25 0L60 30M70 0L94 20M55 50L94 85M10 50L40 95M60 95L94 60"/></g>
<g fill="#1c1c1c"><circle cx="30" cy="17" r="5"/><circle cx="60" cy="10" r="4"/><circle cx="88" cy="60" r="5"/></g>
<polygon points="36.6,42 78.7,24.5 74.5,76 58,85.6 58.3,61.6 47.7,68 46.3,94 38.4,94" fill="#e33535"/>
<polygon points="36.6,42 38.4,94 46.3,94 47.7,68 40,60" fill="#c92a2a" opacity=".7"/>
<path d="M9 27L38 44" stroke="#45e045" stroke-width="5.5"/><path d="M9 27L38 44" stroke="#1c6a1c" stroke-width="4" stroke-dasharray="1 2"/>
<path d="M46 52L54 48" stroke="#45e045" stroke-width="3"/>
<rect x="2" y="90" width="14" height="2" fill="#888"/></svg></div>
<div class="a" style="left:393px;top:1025px;font-size:13.2px;line-height:16px;color:#222;">Clash7</div>
<div class="a" style="left:515px;top:1026px;font-size:13.2px;line-height:16px;color:#222;">Active</div>
<div class="a" style="left:561px;top:1026px;font-size:13.2px;line-height:16px;color:#222;">-0.348</div>
<div class="a" style="left:621px;top:1026px;font-size:13.2px;line-height:16px;color:#222;">D-8 : K_Poziom 0</div>
<div class="a" style="left:742px;top:1026px;font-size:13.2px;line-height:16px;color:#222;">Hard</div>
<div class="a" style="left:820px;top:1026px;font-size:13.2px;line-height:16px;color:#222;">2023/9/20&nbsp; 12:13</div>
<div class="a" style="left:927px;top:1026px;font-size:13.2px;line-height:16px;color:#222;">57.204</div>
<div class="a" style="left:973px;top:1026px;font-size:13.2px;line-height:16px;color:#222;">-60.955</div>
<div class="a" style="left:1028px;top:1026px;font-size:13.2px;line-height:16px;color:#222;">57.952</div>
<div class="a" style="left:1108px;top:1026px;font-size:13.2px;line-height:16px;color:#222;"><i>Element ID</i> : 5163760</div>
<div class="a" style="left:1242px;top:1026px;font-size:13.2px;line-height:16px;color:#222;">K_Poziom +2</div>
<div class="a" style="left:1347px;top:1026px;font-size:13.2px;line-height:16px;color:#222;">Żelbet</div>
<div class="a" style="left:1423px;top:1026px;font-size:13.2px;line-height:16px;color:#222;">Solid</div>
<div class="a" style="left:1492px;top:1026px;font-size:13.2px;line-height:16px;color:#222;"><i>Element ID</i> : 838220</div>
<div class="a" style="left:1626px;top:1026px;font-size:13.2px;line-height:16px;color:#222;">Poziom 0</div>
<div class="a" style="left:1715px;top:1026px;font-size:13.2px;line-height:16px;color:#222;letter-spacing:-0.15px">Cable Tray with Fittings</div>
<div class="a" style="left:1869px;top:1026px;font-size:13.2px;line-height:16px;color:#222;">Line</div>
<div class="a" style="left:263px;top:982px;width:94px;height:95px;overflow:hidden">
<svg width="94" height="95"><rect width="94" height="95" fill="#2b2b2b"/>
<g stroke="#474747" stroke-width="1.6" fill="none"><path d="M0 40L40 20L94 5M0 60L50 35L94 25M0 80L45 55M0 95L40 75M5 0L40 40L94 90M25 0L60 30M70 0L94 20M55 50L94 85M10 50L40 95M60 95L94 60"/></g>
<g fill="#1c1c1c"><circle cx="30" cy="17" r="5"/><circle cx="60" cy="10" r="4"/><circle cx="88" cy="60" r="5"/></g>
<polygon points="36.6,42 78.7,24.5 74.5,76 58,85.6 58.3,61.6 47.7,68 46.3,94 38.4,94" fill="#e33535"/>
<polygon points="36.6,42 38.4,94 46.3,94 47.7,68 40,60" fill="#c92a2a" opacity=".7"/>
<path d="M9 27L38 44" stroke="#45e045" stroke-width="5.5"/><path d="M9 27L38 44" stroke="#1c6a1c" stroke-width="4" stroke-dasharray="1 2"/>
<path d="M46 52L54 48" stroke="#45e045" stroke-width="3"/>
<rect x="2" y="90" width="14" height="2" fill="#888"/></svg></div>
<div class="a" style="left:263px;top:1083px;width:95px;height:14px;background:#2a2a2a"></div>
<div class="a" style="left:389px;top:881px;width:124px;height:102px;border:2px solid #1e7145"></div>
<div class="a" style="left:509px;top:979px;width:6px;height:6px;background:#1e7145;border:1px solid #fff"></div>
<div class="a" style="left:2145px;top:843px;width:22px;height:254px;background:#fff"></div>
<div class="a" style="left:2152px;top:846px"><svg width="10" height="7"><path d="M1 6l4-5 4 5z" fill="#555"/></svg></div>
<div class="a" style="left:2153px;top:859px;width:7px;height:68px;background:#8a8a8a;border-radius:4px"></div>
<div class="a" style="left:2152px;top:1087px"><svg width="10" height="7"><path d="M1 1l4 5 4-5z" fill="#555"/></svg></div>
<div class="a" style="left:237px;top:1097px;width:1932px;height:30px;background:#f3f3f3"></div>
<div class="a" style="left:264px;top:1106px"><svg width="44" height="12"><path d="M6 1L2 6l4 5" stroke="#999" fill="none" stroke-width="1.2"/><path d="M35 1l4 5-4 5" stroke="#666" fill="none" stroke-width="1.2"/></svg></div>
<div class="a" style="left:363px;top:1104px;font-size:13.2px;line-height:16px;color:#333;">B2_Kon v Instal</div>
<div class="a" style="left:474px;top:1097px;width:96px;height:28px;background:#fff;box-shadow:0 1px 2px rgba(0,0,0,.15)"></div>
<div class="a" style="left:482px;top:1102px;font-size:13.2px;line-height:16px;color:#1e5c3a;font-weight:bold;letter-spacing:-0.3px">B2_Kon v Ele</div>
<div class="a" style="left:482px;top:1119px;width:80px;height:2px;background:#1e7145"></div>
<div class="a" style="left:469px;top:1102px;width:1px;height:20px;background:#ccc"></div>
<div class="a" style="left:575px;top:1102px;width:1px;height:20px;background:#ccc"></div>
<div class="a" style="left:615px;top:1106px"><svg width="12" height="12"><path d="M6 0v12M0 6h12" stroke="#555" stroke-width="1.2"/></svg></div>
<div class="a" style="left:1397px;top:1106px;width:2px;height:2px;background:#444;box-shadow:0 4px 0 #444,0 8px 0 #444"></div>
<div class="a" style="left:1419px;top:1107px"><svg width="8" height="10"><path d="M7 1L2 5l5 4z" fill="#555"/></svg></div>
<div class="a" style="left:1432px;top:1108px;width:383px;height:8px;background:#8a8a8a;border-radius:4px"></div>
<div class="a" style="left:2137px;top:1107px"><svg width="8" height="10"><path d="M1 1l5 4-5 4z" fill="#555"/></svg></div>
<div class="a" style="left:237px;top:1127px;width:1932px;height:24px;background:#f2f2f2;border-top:1px solid #fff"></div>
<div class="a" style="left:244px;top:1133px;font-size:12.2px;line-height:15px;color:#333;transform:scaleX(0.977);transform-origin:0 0;">Gotowy</div>
<div class="a" style="left:303px;top:1133px"><svg width="16" height="14"><rect x="1" y="1" width="13" height="11" fill="none" stroke="#444"/><path d="M1 4h13M3 7h3M3 9h3" stroke="#444"/><circle cx="10" cy="9" r="2.5" fill="none" stroke="#444"/><circle cx="10" cy="9" r="1" fill="#444"/></svg></div>
<div class="a" style="left:335px;top:1132px"><svg width="16" height="15"><circle cx="8" cy="3" r="2" fill="none" stroke="#444"/><path d="M2 6h12M8 6v4l-3 4M8 10l3 4" stroke="#444" fill="none"/><path d="M10 9l5 5M15 9l-5 5" stroke="#444"/></svg></div>
<div class="a" style="left:354px;top:1133px;font-size:12.2px;line-height:15px;color:#333;transform:scaleX(0.964);transform-origin:0 0;">Ułatwienia dostępu: zbadaj</div>
<div class="a" style="left:1860px;top:1129px;width:34px;height:21px;background:#e3e3e3"></div>
<div class="a" style="left:1870px;top:1133px"><svg width="120" height="14"><rect x="1" y="1" width="13" height="12" fill="none" stroke="#333"/><path d="M1 5h13M1 9h13M5 1v12M10 1v12" stroke="#333"/><rect x="41" y="1" width="13" height="12" fill="none" stroke="#333"/><rect x="44" y="4" width="7" height="6" fill="none" stroke="#333"/><rect x="81" y="1" width="13" height="12" fill="none" stroke="#333"/><path d="M81 6h13M87 1v5" stroke="#333"/></svg></div>
<div class="a" style="left:1984px;top:1139px;width:8px;height:1px;background:#333"></div>
<div class="a" style="left:2000px;top:1139px;width:96px;height:1px;background:#777"></div>
<div class="a" style="left:2045px;top:1134px;width:4px;height:11px;background:#555"></div>
<div class="a" style="left:2100px;top:1134px"><svg width="10" height="10"><path d="M5 0v10M0 5h10" stroke="#333"/></svg></div>
<div class="a" style="left:2122px;top:1133px;font-size:11.2px;line-height:13px;color:#333;">100%</div>
</body></html>
